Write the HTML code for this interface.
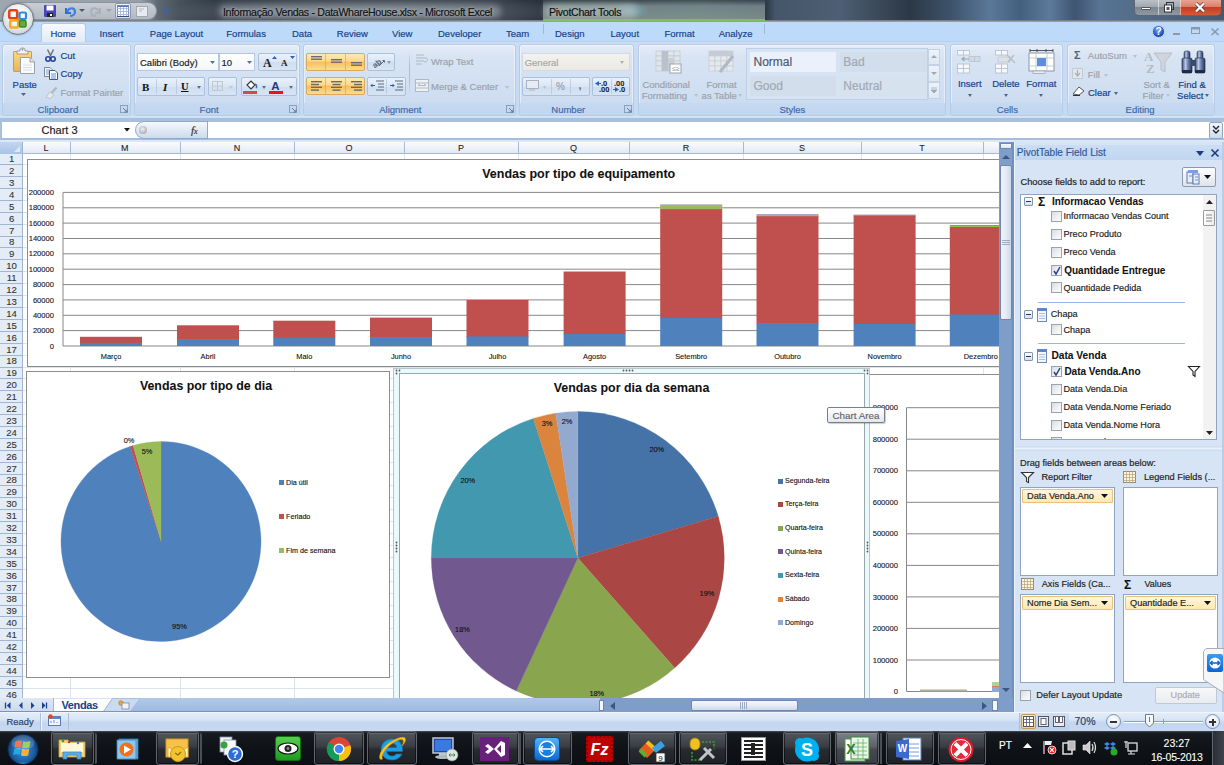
<!DOCTYPE html>
<html><head><meta charset="utf-8">
<style>
*{box-sizing:border-box}
body{margin:0;width:1224px;height:765px;overflow:hidden;position:relative;font-family:"Liberation Sans",sans-serif;background:#fff}
.a{position:absolute;margin:0}
.t{position:absolute;white-space:nowrap;line-height:1;-webkit-text-stroke:0.18px currentColor}
svg.a{overflow:visible}
</style></head><body>
<div class="a" style="left:0px;top:0px;width:1224px;height:21px;background:linear-gradient(90deg,#9ea6af 0,#97a0aa 140px,#5d6873 158px,#46515c 180px,#323c47 215px,#2f3843 330px,#343e49 480px,#2a333d 540px,#2c3a40 560px,#3b4a4e 700px,#2d3944 766px,#45556a 775px,#4d5f74 840px,#3a4858 880px,#2c3846 910px,#3d526a 950px,#5a7898 990px,#44607e 1020px,#5c7a9a 1050px,#3f5570 1075px,#587494 1100px,#46586e 1224px)"></div>
<div class="a" style="left:160px;top:-6px;width:420px;height:30px;background:radial-gradient(ellipse at 50% 60%,rgba(160,168,176,.55),rgba(120,130,140,0) 70%)"></div>
<div class="a" style="left:0px;top:20px;width:1224px;height:2px;background:linear-gradient(180deg,#6a737d,#a3aab2)"></div>
<div class="a" style="left:20px;top:2px;width:137px;height:18px;border-radius:0 9px 9px 0;background:linear-gradient(180deg,#c9ced5,#b2b9c2);border:1px solid #8b939d;border-left:none"></div>
<div class="a" style="left:2px;top:3px;width:32px;height:32px;border-radius:50%;background:radial-gradient(circle at 50% 40%,#ffffff 0,#f2f4f6 40%,#d5dae0 70%,#b9c0c8 86%,#8e969f 100%);border:1px solid #6f7882;box-shadow:0 0 2px rgba(0,0,0,.35);z-index:5"></div>
<svg class="a" style="left:8px;top:9px;z-index:6" width="20" height="20" viewBox="0 0 20 20"><rect x="1.2" y="1.2" width="8" height="8" rx="1.8" fill="none" stroke="#e2451c" stroke-width="2.6"/><rect x="11.5" y="3.5" width="6.5" height="6.5" rx="1.4" fill="none" stroke="#2b8fdc" stroke-width="2.2"/><rect x="2.2" y="11.5" width="8" height="7" rx="1.8" fill="none" stroke="#f5ad1e" stroke-width="2.6"/><rect x="11.5" y="11.5" width="6.5" height="6.5" rx="1.4" fill="#62b03a" stroke="#3f8d1e" stroke-width="1.6"/><circle cx="10.3" cy="10.3" r="1.4" fill="#e8842a"/></svg>
<svg class="a" style="left:44px;top:5px;" width="12" height="12" viewBox="0 0 12 12"><rect x="0" y="0" width="12" height="12" rx="1" fill="#4b43b8"/><rect x="2.5" y="0.5" width="7" height="5" fill="#fff"/><rect x="3" y="8" width="6" height="4" fill="#222"/><rect x="6" y="9" width="2" height="2" fill="#fff"/></svg>
<svg class="a" style="left:63px;top:5px;" width="14" height="12" viewBox="0 0 14 12"><path d="M3 3 L3 8 L8 8" fill="none" stroke="#2d6fd0" stroke-width="2"/><path d="M4 7 C6 2,12 2,12 7 C12 10,9 11,7 11" fill="none" stroke="#3d7fe0" stroke-width="2.2"/></svg>
<svg class="a" style="left:79px;top:9px;" width="6" height="4" viewBox="0 0 6 4"><path d="M0 0 L6 0 L3 3Z" fill="#4a5a70"/></svg>
<svg class="a" style="left:90px;top:5px;" width="13" height="12" viewBox="0 0 13 12"><path d="M10 3 L10 8 L5 8" fill="none" stroke="#a9b0b8" stroke-width="2"/><path d="M9 7 C7 2,1 2,1 7 C1 10,4 11,6 11" fill="none" stroke="#a9b0b8" stroke-width="2"/></svg>
<svg class="a" style="left:106px;top:9px;" width="6" height="4" viewBox="0 0 6 4"><path d="M0 0 L6 0 L3 3Z" fill="#9aa3ad"/></svg>
<div class="a" style="left:115px;top:3px;width:16px;height:16px;background:linear-gradient(180deg,#f4f6f9,#d9dee5);border:1px solid #8d96a1;border-radius:2px"></div>
<svg class="a" style="left:117px;top:5px;" width="12" height="12" viewBox="0 0 12 12"><rect x="0.5" y="0.5" width="11" height="11" fill="#fff" stroke="#7a90b8"/><path d="M0 3.5H12M0 6.5H12M0 9.5H12M3.5 0V12M6.5 0V12M9.5 0V12" stroke="#9ab0d8" stroke-width="0.8"/><rect x="0.5" y="0.5" width="11" height="1.5" fill="#5a78b0"/><rect x="0" y="11" width="12" height="1" fill="#34507a"/></svg>
<svg class="a" style="left:136px;top:6px;" width="12" height="11" viewBox="0 0 12 11"><rect x="0.5" y="0.5" width="11" height="10" fill="#e8ecf0" stroke="#a0a8b0"/><path d="M3 3H8M3 5H6" stroke="#b0b8c0"/></svg>
<svg class="a" style="left:163px;top:8px;" width="6" height="6" viewBox="0 0 6 6"><path d="M0.5 0.5H5.5M0.5 2.5 L5.5 2.5 L3 5.5Z" stroke="#3a62b0" fill="#3a62b0" stroke-width="0.8"/></svg>
<div class="a" style="left:219px;top:5px;width:282px;height:13px;border-radius:6px;background:rgba(160,168,176,.62);filter:blur(3px)"></div>
<div class="t" style="left:223.0px;top:6.5px;font-size:10.6px;color:#101010;letter-spacing:-0.32px;text-shadow:0 0 3px #c0c5ca">Informação Vendas - DataWhareHouse.xlsx - Microsoft Excel</div>
<div class="a" style="left:543px;top:0px;width:222px;height:20px;background:linear-gradient(180deg,rgba(90,105,115,.2) 0,rgba(150,168,172,.62) 30%,rgba(150,175,165,.7) 100%)"></div>
<div class="a" style="left:610px;top:2px;width:40px;height:17px;background:radial-gradient(ellipse at 50% 50%,rgba(120,190,220,.6),rgba(120,190,220,0) 70%)"></div>
<div class="a" style="left:543px;top:19px;width:222px;height:2px;background:#7cc05a"></div>
<div class="a" style="left:545px;top:5px;width:92px;height:13px;border-radius:6px;background:rgba(175,185,182,.75);filter:blur(3px)"></div>
<div class="t" style="left:549.0px;top:6.5px;font-size:10.6px;color:#101010;letter-spacing:-0.3px">PivotChart Tools</div>
<div class="a" style="left:1134px;top:0px;width:87px;height:16px;border:1px solid #5c6570;border-top:none;border-radius:0 0 5px 5px;overflow:hidden;background:linear-gradient(180deg,#b9c0c8 0,#a0a8b2 45%,#7d8792 50%,#8e98a3 100%)"></div>
<div class="a" style="left:1180px;top:0px;width:41px;height:15px;border-radius:0 0 4px 0;background:linear-gradient(180deg,#e8a393 0,#d9806b 45%,#c43f22 50%,#d45a3a 100%)"></div>
<div class="a" style="left:1158px;top:0px;width:1px;height:15px;background:rgba(255,255,255,.5)"></div>
<div class="a" style="left:1180px;top:0px;width:1px;height:15px;background:rgba(255,255,255,.5)"></div>
<div class="a" style="left:1141px;top:7px;width:10px;height:3px;background:#fff;border:1px solid #555;border-radius:1px"></div>
<svg class="a" style="left:1163px;top:2px;" width="12" height="11" viewBox="0 0 12 11"><rect x="3.5" y="0.5" width="7" height="7" fill="none" stroke="#333" stroke-width="1"/><rect x="1.5" y="3" width="7" height="7" fill="#fff" stroke="#333" stroke-width="1"/><rect x="3.5" y="5" width="3" height="3" fill="#555"/></svg>
<svg class="a" style="left:1193px;top:2px;" width="14" height="11" viewBox="0 0 14 11"><path d="M3 1.5 L11 9.5 M11 1.5 L3 9.5" stroke="#5a2a20" stroke-width="3.6"/><path d="M3 1.5 L11 9.5 M11 1.5 L3 9.5" stroke="#fff" stroke-width="2.4"/></svg>
<div class="a" style="left:0px;top:22px;width:1224px;height:20px;background:#bedafb"></div>
<div class="a" style="left:0px;top:41px;width:1224px;height:2px;background:linear-gradient(180deg,#a9c4e7,#dce8f6)"></div>
<div class="a" style="left:41px;top:23px;width:45px;height:20px;border:1px solid #b3c8e3;border-bottom:none;border-radius:3px 3px 0 0;background:linear-gradient(180deg,#f7fafd 0,#e9f0f9 60%,#dfe9f5 100%)"></div>
<div class="t" style="left:50.5px;top:28.7px;font-size:9.5px;color:#15428b;">Home</div>
<div class="t" style="left:99.6px;top:28.7px;font-size:9.5px;color:#15428b;">Insert</div>
<div class="t" style="left:149.8px;top:28.7px;font-size:9.5px;color:#15428b;">Page Layout</div>
<div class="t" style="left:226.3px;top:28.7px;font-size:9.5px;color:#15428b;">Formulas</div>
<div class="t" style="left:292.0px;top:28.7px;font-size:9.5px;color:#15428b;">Data</div>
<div class="t" style="left:336.8px;top:28.7px;font-size:9.5px;color:#15428b;">Review</div>
<div class="t" style="left:392.0px;top:28.7px;font-size:9.5px;color:#15428b;">View</div>
<div class="t" style="left:438.0px;top:28.7px;font-size:9.5px;color:#15428b;">Developer</div>
<div class="t" style="left:506.0px;top:28.7px;font-size:9.5px;color:#15428b;">Team</div>
<div class="t" style="left:555.0px;top:28.7px;font-size:9.5px;color:#15428b;">Design</div>
<div class="t" style="left:610.5px;top:28.7px;font-size:9.5px;color:#15428b;">Layout</div>
<div class="t" style="left:664.5px;top:28.7px;font-size:9.5px;color:#15428b;">Format</div>
<div class="t" style="left:718.7px;top:28.7px;font-size:9.5px;color:#15428b;">Analyze</div>
<div class="a" style="left:543px;top:24px;width:1px;height:10px;background:#9db7d9"></div>
<div class="a" style="left:764px;top:24px;width:1px;height:10px;background:#9db7d9"></div>
<div class="a" style="left:1152px;top:25px;width:13px;height:13px;border-radius:50%;background:radial-gradient(circle at 45% 35%,#6aa2f0,#1a48b8 70%);border:1px solid #b8cde8"></div>
<div class="t" style="left:1158.5px;transform:translateX(-50%);top:26.8px;font-size:10px;color:#fff;font-weight:bold;-webkit-text-stroke:0.05px currentColor;">?</div>
<div class="a" style="left:1173px;top:33px;width:7px;height:2px;background:#8a98aa"></div>
<svg class="a" style="left:1191px;top:27px;" width="10" height="8" viewBox="0 0 10 8"><rect x="0.5" y="0.5" width="8" height="6" fill="none" stroke="#8a98aa"/><rect x="0.5" y="0.5" width="8" height="2" fill="#8a98aa"/></svg>
<svg class="a" style="left:1210px;top:27px;" width="10" height="9" viewBox="0 0 10 9"><path d="M1.5 1.5L8.5 8M8.5 1.5L1.5 8" stroke="#8a98aa" stroke-width="1.6"/></svg>
<div class="a" style="left:0px;top:42px;width:1224px;height:77px;background:linear-gradient(180deg,#c9ddf6 0,#c4d9f3 100%)"></div>
<div class="a" style="left:0px;top:117px;width:1224px;height:2px;background:#b4c9e5"></div>
<div class="a" style="left:2px;top:44px;width:129px;height:72px;border:1px solid #b7cbe4;border-radius:3px;background:linear-gradient(180deg,#e4ecf7 0,#d8e4f3 18%,#cfdef1 70%,#c9daef 100%);box-shadow:inset 0 0 0 1px rgba(255,255,255,.45)"></div>
<div class="a" style="left:3px;top:103px;width:127px;height:12px;background:linear-gradient(180deg,#c5d9f0,#c1d6f0);border-radius:0 0 2px 2px"></div>
<div class="t" style="left:37.6px;top:104.7px;font-size:9.5px;color:#3e6aaa;">Clipboard</div>
<svg class="a" style="left:120px;top:105px;" width="8" height="8" viewBox="0 0 8 8"><rect x="0.5" y="0.5" width="7" height="7" fill="none" stroke="#8aa0bc" stroke-width="1"/><path d="M3 3 L7 7 M4.5 7H7V4.5" stroke="#667a96" fill="none"/></svg>
<div class="a" style="left:13px;top:51px;width:19px;height:21px;background:linear-gradient(180deg,#f9d88a,#eab552);border:1px solid #cf9d45;border-radius:1px"></div>
<svg class="a" style="left:16px;top:47px;" width="13" height="8" viewBox="0 0 13 8"><path d="M1 7 V4 H4 V2 Q6.5 -0.5 9 2 V4 H12 V7Z" fill="#f4f4f4" stroke="#8a8a8a" stroke-width="0.8"/><circle cx="6.5" cy="2.5" r="0.9" fill="#888"/></svg>
<svg class="a" style="left:20px;top:57px;" width="15" height="17" viewBox="0 0 15 17"><path d="M0.5 0.5 H10 L14.5 5 V16.5 H0.5Z" fill="#fbfbfb" stroke="#9aa0a8"/><path d="M10 0.5 V5 H14.5" fill="#e0e4e8" stroke="#9aa0a8"/><path d="M3 8H12M3 10.5H12M3 13H12" stroke="#d2d6dc" stroke-width="0.8"/></svg>
<div class="t" style="left:12.6px;top:79.9px;font-size:9.5px;color:#15428b;">Paste</div>
<svg class="a" style="left:21px;top:93px;" width="5" height="3" viewBox="0 0 5 3"><path d="M0 0H5L2.5 3Z" fill="#4e6588"/></svg>
<svg class="a" style="left:45px;top:49px;" width="11" height="13" viewBox="0 0 11 13"><path d="M2.5 0.5 L6 7.5 M8.5 0.5 L5 7.5" stroke="#6a6e74" stroke-width="1.4"/><circle cx="3" cy="10" r="2.2" fill="none" stroke="#27459a" stroke-width="1.6"/><circle cx="8" cy="10" r="2.2" fill="none" stroke="#27459a" stroke-width="1.6"/></svg>
<div class="t" style="left:60.4px;top:50.7px;font-size:9.5px;color:#15428b;">Cut</div>
<svg class="a" style="left:44px;top:67px;" width="14" height="13" viewBox="0 0 14 13"><path d="M0.5 0.5H6L8 2.5V9.5H0.5Z" fill="#f4f6f9" stroke="#7a8494"/><path d="M2 3H6M2 5H6M2 7H6" stroke="#5a8ad0" stroke-width="0.8"/><path d="M5.5 3.5H11L13.5 6V12.5H5.5Z" fill="#fff" stroke="#3a5aa0"/><path d="M7 7H12M7 9H12M7 11H12" stroke="#3a70c8" stroke-width="0.8"/></svg>
<div class="t" style="left:60.4px;top:69.2px;font-size:9.5px;color:#15428b;">Copy</div>
<svg class="a" style="left:45px;top:86px;" width="13" height="13" viewBox="0 0 13 13"><path d="M1 11.5 L4.5 6 L9 8.5 L5.5 12.5Z" fill="#e6e9ed" stroke="#b4bac2" stroke-width="0.8"/><path d="M6.5 7 L11.5 1.5" stroke="#b4bac2" stroke-width="2.6"/></svg>
<div class="t" style="left:60.4px;top:87.6px;font-size:9.5px;color:#9aa2ab;">Format Painter</div>
<div class="a" style="left:134px;top:44px;width:166px;height:72px;border:1px solid #b7cbe4;border-radius:3px;background:linear-gradient(180deg,#e4ecf7 0,#d8e4f3 18%,#cfdef1 70%,#c9daef 100%);box-shadow:inset 0 0 0 1px rgba(255,255,255,.45)"></div>
<div class="a" style="left:135px;top:103px;width:164px;height:12px;background:linear-gradient(180deg,#c5d9f0,#c1d6f0);border-radius:0 0 2px 2px"></div>
<div class="t" style="left:199.6px;top:104.7px;font-size:9.5px;color:#3e6aaa;">Font</div>
<svg class="a" style="left:289px;top:105px;" width="8" height="8" viewBox="0 0 8 8"><rect x="0.5" y="0.5" width="7" height="7" fill="none" stroke="#8aa0bc" stroke-width="1"/><path d="M3 3 L7 7 M4.5 7H7V4.5" stroke="#667a96" fill="none"/></svg>
<div class="a" style="left:137px;top:53px;width:82px;height:18px;border:1px solid #b3c7e1;background:linear-gradient(180deg,#ffffff,#f3f7fc)"></div>
<div class="t" style="left:140.0px;top:57.7px;font-size:9.5px;color:#222;">Calibri (Body)</div>
<svg class="a" style="left:210px;top:61px;" width="5" height="3" viewBox="0 0 5 3"><path d="M0 0H5L2.5 3Z" fill="#5a7090"/></svg>
<div class="a" style="left:219px;top:53px;width:36px;height:18px;border:1px solid #b3c7e1;background:linear-gradient(180deg,#ffffff,#f3f7fc)"></div>
<div class="t" style="left:221.5px;top:57.7px;font-size:9.5px;color:#222;">10</div>
<svg class="a" style="left:247px;top:61px;" width="5" height="3" viewBox="0 0 5 3"><path d="M0 0H5L2.5 3Z" fill="#5a7090"/></svg>
<div class="a" style="left:258px;top:53px;width:39px;height:18px;border:1px solid #a9c0de;border-radius:2px;background:linear-gradient(180deg,#eaf1fa 0,#dae6f4 50%,#cfdef0 51%,#d7e4f3 100%);"></div>
<div class="t" style="left:263.0px;top:56.7px;font-size:12px;color:#222;font-weight:bold;-webkit-text-stroke:0.05px currentColor;font-family:Liberation Serif,serif;">A</div>
<svg class="a" style="left:272px;top:56px;" width="5" height="3" viewBox="0 0 5 3"><path d="M0 3L2.5 0L5 3Z" fill="#3060b0"/></svg>
<div class="t" style="left:281.0px;top:59.2px;font-size:9px;color:#222;font-weight:bold;-webkit-text-stroke:0.05px currentColor;font-family:Liberation Serif,serif;">A</div>
<svg class="a" style="left:290px;top:56px;" width="5" height="3" viewBox="0 0 5 3"><path d="M0 0H5L2.5 3Z" fill="#3060b0"/></svg>
<div class="a" style="left:137px;top:77px;width:68px;height:19px;border:1px solid #a9c0de;border-radius:2px;background:linear-gradient(180deg,#eaf1fa 0,#dae6f4 50%,#cfdef0 51%,#d7e4f3 100%);"></div>
<div class="a" style="left:156px;top:79px;width:1px;height:15px;background:rgba(170,190,215,.6)"></div>
<div class="a" style="left:176px;top:79px;width:1px;height:15px;background:rgba(170,190,215,.6)"></div>
<div class="t" style="left:142.0px;top:81.5px;font-size:11px;color:#111;font-weight:bold;-webkit-text-stroke:0.05px currentColor;font-family:Liberation Serif,serif;">B</div>
<div class="t" style="left:163.0px;top:81.5px;font-size:11px;color:#111;font-weight:bold;-webkit-text-stroke:0.05px currentColor;font-style:italic;font-family:Liberation Serif,serif">I</div>
<div class="t" style="left:181.0px;top:81.5px;font-size:10.5px;color:#111;font-weight:bold;-webkit-text-stroke:0.05px currentColor;text-decoration:underline;font-family:Liberation Serif,serif">U</div>
<svg class="a" style="left:197px;top:86px;" width="4" height="3" viewBox="0 0 4 3"><path d="M0 0H4L2.0 3Z" fill="#5a7090"/></svg>
<div class="a" style="left:208px;top:77px;width:29px;height:19px;border:1px solid #a9c0de;border-radius:2px;background:linear-gradient(180deg,#eaf1fa 0,#dae6f4 50%,#cfdef0 51%,#d7e4f3 100%);"></div>
<svg class="a" style="left:212px;top:81px;" width="12" height="11" viewBox="0 0 12 11"><rect x="0.5" y="0.5" width="10" height="9" fill="none" stroke="#c0c8d2"/><path d="M5.5 0V10M0 5H11" stroke="#c0c8d2"/></svg>
<svg class="a" style="left:229px;top:86px;" width="4" height="3" viewBox="0 0 4 3"><path d="M0 0H4L2.0 3Z" fill="#c0c8d2"/></svg>
<div class="a" style="left:241px;top:77px;width:56px;height:19px;border:1px solid #a9c0de;border-radius:2px;background:linear-gradient(180deg,#eaf1fa 0,#dae6f4 50%,#cfdef0 51%,#d7e4f3 100%);"></div>
<svg class="a" style="left:244px;top:79px;" width="15" height="11" viewBox="0 0 15 11"><path d="M3 6 L7 2 L11 6 L7 10Z" fill="#fff" stroke="#333" stroke-width="1.1"/><path d="M11 5 C13 6,13 8,12 9" stroke="#3a70c0" stroke-width="1.6" fill="none"/></svg>
<div class="a" style="left:243px;top:91px;width:14px;height:3px;background:#d24a4a"></div>
<svg class="a" style="left:262px;top:86px;" width="4" height="3" viewBox="0 0 4 3"><path d="M0 0H4L2.0 3Z" fill="#5a7090"/></svg>
<div class="t" style="left:275.5px;transform:translateX(-50%);top:80.5px;font-size:11.5px;color:#1f3a80;font-weight:bold;-webkit-text-stroke:0.05px currentColor;">A</div>
<div class="a" style="left:269px;top:91px;width:14px;height:3px;background:#e8141a"></div>
<svg class="a" style="left:289px;top:86px;" width="4" height="3" viewBox="0 0 4 3"><path d="M0 0H4L2.0 3Z" fill="#5a7090"/></svg>
<div class="a" style="left:303px;top:44px;width:213px;height:72px;border:1px solid #b7cbe4;border-radius:3px;background:linear-gradient(180deg,#e4ecf7 0,#d8e4f3 18%,#cfdef1 70%,#c9daef 100%);box-shadow:inset 0 0 0 1px rgba(255,255,255,.45)"></div>
<div class="a" style="left:304px;top:103px;width:211px;height:12px;background:linear-gradient(180deg,#c5d9f0,#c1d6f0);border-radius:0 0 2px 2px"></div>
<div class="t" style="left:379.2px;top:104.7px;font-size:9.5px;color:#3e6aaa;">Alignment</div>
<svg class="a" style="left:506px;top:105px;" width="8" height="8" viewBox="0 0 8 8"><rect x="0.5" y="0.5" width="7" height="7" fill="none" stroke="#8aa0bc" stroke-width="1"/><path d="M3 3 L7 7 M4.5 7H7V4.5" stroke="#667a96" fill="none"/></svg>
<div class="a" style="left:306px;top:53px;width:59px;height:18px;border:1px solid #d9aa5c;border-radius:2px;background:linear-gradient(180deg,#fde9b6 0,#fcd88b 45%,#f9bf5a 50%,#fbdc8f 100%)"></div>
<div class="a" style="left:325px;top:54px;width:1px;height:16px;background:rgba(210,160,80,.6)"></div>
<div class="a" style="left:345px;top:54px;width:1px;height:16px;background:rgba(210,160,80,.6)"></div>
<div class="a" style="left:306px;top:77px;width:59px;height:18px;border:1px solid #d9aa5c;border-radius:2px;background:linear-gradient(180deg,#fde9b6 0,#fcd88b 45%,#f9bf5a 50%,#fbdc8f 100%)"></div>
<div class="a" style="left:325px;top:78px;width:1px;height:16px;background:rgba(210,160,80,.6)"></div>
<div class="a" style="left:345px;top:78px;width:1px;height:16px;background:rgba(210,160,80,.6)"></div>
<svg class="a" style="left:310px;top:55px;" width="13" height="13" viewBox="0 0 13 13"><rect x="1" y="1.0" width="11" height="1.4" fill="#6a6a6a"/><rect x="1" y="3.5" width="11" height="1.4" fill="#6a6a6a"/></svg>
<svg class="a" style="left:330px;top:55px;" width="13" height="13" viewBox="0 0 13 13"><rect x="1" y="4.0" width="11" height="1.4" fill="#6a6a6a"/><rect x="1" y="6.5" width="11" height="1.4" fill="#6a6a6a"/></svg>
<svg class="a" style="left:350px;top:55px;" width="13" height="13" viewBox="0 0 13 13"><rect x="1" y="7.0" width="11" height="1.4" fill="#6a6a6a"/><rect x="1" y="9.5" width="11" height="1.4" fill="#6a6a6a"/></svg>
<svg class="a" style="left:310px;top:80px;" width="13" height="12" viewBox="0 0 13 12"><rect x="1" y="1.0" width="11" height="1.4" fill="#6a6a6a"/><rect x="1" y="3.8" width="8" height="1.4" fill="#6a6a6a"/><rect x="1" y="6.6" width="11" height="1.4" fill="#6a6a6a"/><rect x="1" y="9.399999999999999" width="8" height="1.4" fill="#6a6a6a"/></svg>
<svg class="a" style="left:330px;top:80px;" width="13" height="12" viewBox="0 0 13 12"><rect x="1" y="1.0" width="11" height="1.4" fill="#6a6a6a"/><rect x="2.5" y="3.8" width="8" height="1.4" fill="#6a6a6a"/><rect x="1" y="6.6" width="11" height="1.4" fill="#6a6a6a"/><rect x="2.5" y="9.399999999999999" width="8" height="1.4" fill="#6a6a6a"/></svg>
<svg class="a" style="left:350px;top:80px;" width="13" height="12" viewBox="0 0 13 12"><rect x="1" y="1.0" width="11" height="1.4" fill="#6a6a6a"/><rect x="4" y="3.8" width="8" height="1.4" fill="#6a6a6a"/><rect x="1" y="6.6" width="11" height="1.4" fill="#6a6a6a"/><rect x="4" y="9.399999999999999" width="8" height="1.4" fill="#6a6a6a"/></svg>
<div class="a" style="left:367px;top:53px;width:28px;height:18px;border:1px solid #a9c0de;border-radius:2px;background:linear-gradient(180deg,#eaf1fa 0,#dae6f4 50%,#cfdef0 51%,#d7e4f3 100%);"></div>
<svg class="a" style="left:370px;top:55px;" width="16" height="13" viewBox="0 0 16 13"><text x="2" y="11" font-size="8" font-weight="bold" font-family="Liberation Sans" fill="#5a6678" transform="rotate(-40 7 8)">ab</text><path d="M9 11 L14 6 M12.5 5.5 L14.5 5.5 L14.5 7.5" stroke="#5a6678" stroke-width="1" fill="none"/></svg>
<svg class="a" style="left:387px;top:61px;" width="4" height="3" viewBox="0 0 4 3"><path d="M0 0H4L2.0 3Z" fill="#8a9ab0"/></svg>
<div class="a" style="left:367px;top:77px;width:39px;height:19px;border:1px solid #a9c0de;border-radius:2px;background:linear-gradient(180deg,#eaf1fa 0,#dae6f4 50%,#cfdef0 51%,#d7e4f3 100%);"></div>
<div class="a" style="left:386px;top:79px;width:1px;height:15px;background:rgba(170,190,215,.6)"></div>
<svg class="a" style="left:371px;top:80px;" width="14" height="12" viewBox="0 0 14 12"><path d="M5 1H13M7 4H13M7 7H13M5 10H13" stroke="#5a6a80" stroke-width="1.2"/><path d="M0 5.5H4M1.5 4L0 5.5L1.5 7" stroke="#2a5ab0" fill="none"/></svg>
<svg class="a" style="left:390px;top:80px;" width="14" height="12" viewBox="0 0 14 12"><path d="M5 1H13M7 4H13M7 7H13M5 10H13" stroke="#5a6a80" stroke-width="1.2"/><path d="M0 5.5H4M2.5 4L4 5.5L2.5 7" stroke="#2a5ab0" fill="none"/></svg>
<div class="a" style="left:409px;top:52px;width:1px;height:42px;background:linear-gradient(180deg,rgba(160,185,215,0),#a9c0dc 30%,#a9c0dc 70%,rgba(160,185,215,0))"></div>
<svg class="a" style="left:415px;top:53px;" width="14" height="14" viewBox="0 0 14 14"><path d="M1 2H9M1 5H11M1 8H9M1 11H7" stroke="#b0b8c2" stroke-width="1.2"/><path d="M11 5 C13 5,13 9,10 9 L9 9" stroke="#b0b8c2" fill="none"/></svg>
<div class="t" style="left:431.0px;top:57.4px;font-size:9.5px;color:#9aa2ab;">Wrap Text</div>
<svg class="a" style="left:415px;top:79px;" width="14" height="13" viewBox="0 0 14 13"><rect x="0.5" y="0.5" width="13" height="12" fill="#eef2f6" stroke="#b0b8c2"/><path d="M0 4H14M0 9H14M3 6.5H11M3 6.5L5 5M11 6.5L9 5" stroke="#b0b8c2"/></svg>
<div class="t" style="left:431.0px;top:81.9px;font-size:9.5px;color:#9aa2ab;">Merge &amp; Center</div>
<svg class="a" style="left:505px;top:86px;" width="4" height="3" viewBox="0 0 4 3"><path d="M0 0H4L2.0 3Z" fill="#b8c0ca"/></svg>
<div class="a" style="left:519px;top:44px;width:115px;height:72px;border:1px solid #b7cbe4;border-radius:3px;background:linear-gradient(180deg,#e4ecf7 0,#d8e4f3 18%,#cfdef1 70%,#c9daef 100%);box-shadow:inset 0 0 0 1px rgba(255,255,255,.45)"></div>
<div class="a" style="left:520px;top:103px;width:113px;height:12px;background:linear-gradient(180deg,#c5d9f0,#c1d6f0);border-radius:0 0 2px 2px"></div>
<div class="t" style="left:551.3px;top:104.7px;font-size:9.5px;color:#3e6aaa;">Number</div>
<svg class="a" style="left:624px;top:105px;" width="8" height="8" viewBox="0 0 8 8"><rect x="0.5" y="0.5" width="7" height="7" fill="none" stroke="#8aa0bc" stroke-width="1"/><path d="M3 3 L7 7 M4.5 7H7V4.5" stroke="#667a96" fill="none"/></svg>
<div class="a" style="left:522px;top:53px;width:108px;height:18px;border:1px solid #d3dbe6;background:linear-gradient(180deg,#f4f2ee,#ece9e4)"></div>
<div class="t" style="left:524.7px;top:57.7px;font-size:9.5px;color:#a8a8a8;">General</div>
<svg class="a" style="left:620px;top:61px;" width="4" height="3" viewBox="0 0 4 3"><path d="M0 0H4L2.0 3Z" fill="#b0b0b0"/></svg>
<div class="a" style="left:522px;top:77px;width:68px;height:19px;border:1px solid #a9c0de;border-radius:2px;background:linear-gradient(180deg,#eaf1fa 0,#dae6f4 50%,#cfdef0 51%,#d7e4f3 100%);"></div>
<div class="a" style="left:551px;top:79px;width:1px;height:15px;background:rgba(170,190,215,.6)"></div>
<div class="a" style="left:570px;top:79px;width:1px;height:15px;background:rgba(170,190,215,.6)"></div>
<svg class="a" style="left:526px;top:80px;" width="14" height="12" viewBox="0 0 14 12"><rect x="0.5" y="0.5" width="12" height="8" fill="#e8ecf2" stroke="#a8b2c0"/><path d="M3 10 L9 10" stroke="#a8b2c0"/></svg>
<svg class="a" style="left:543px;top:86px;" width="3" height="3" viewBox="0 0 3 3"><path d="M0 0H3L1.5 3Z" fill="#b8c0ca"/></svg>
<div class="t" style="left:560.5px;transform:translateX(-50%);top:81.7px;font-size:10px;color:#9aa2ac;">%</div>
<div class="t" style="left:580.0px;transform:translateX(-50%);top:79.7px;font-size:11px;color:#6a7280;font-weight:bold;-webkit-text-stroke:0.05px currentColor;">,</div>
<div class="a" style="left:592px;top:77px;width:38px;height:19px;border:1px solid #a9c0de;border-radius:2px;background:linear-gradient(180deg,#eaf1fa 0,#dae6f4 50%,#cfdef0 51%,#d7e4f3 100%);"></div>
<div class="a" style="left:611px;top:79px;width:1px;height:15px;background:rgba(170,190,215,.6)"></div>
<svg class="a" style="left:595px;top:81px;" width="4" height="5" viewBox="0 0 4 5"><path d="M0 2.5L4 0V5Z" fill="#2a62c8"/></svg>
<div class="a" style="left:598px;top:83px;width:3px;height:1px;background:#2a62c8"></div>
<div class="t" style="left:601.0px;top:79.7px;font-size:7.5px;color:#1a1a1a;font-weight:bold;-webkit-text-stroke:0.05px currentColor;">.0</div>
<div class="t" style="left:599.0px;top:86.0px;font-size:7.5px;color:#1a1a1a;font-weight:bold;-webkit-text-stroke:0.05px currentColor;">.00</div>
<div class="t" style="left:614.0px;top:79.7px;font-size:7.5px;color:#1a1a1a;font-weight:bold;-webkit-text-stroke:0.05px currentColor;">.00</div>
<svg class="a" style="left:615px;top:87px;" width="4" height="5" viewBox="0 0 4 5"><path d="M4 2.5L0 0V5Z" fill="#2a62c8"/></svg>
<div class="a" style="left:613px;top:89px;width:3px;height:1px;background:#2a62c8"></div>
<div class="t" style="left:619.0px;top:86.0px;font-size:7.5px;color:#1a1a1a;font-weight:bold;-webkit-text-stroke:0.05px currentColor;">.0</div>
<div class="a" style="left:638px;top:44px;width:308px;height:72px;border:1px solid #b7cbe4;border-radius:3px;background:linear-gradient(180deg,#e4ecf7 0,#d8e4f3 18%,#cfdef1 70%,#c9daef 100%);box-shadow:inset 0 0 0 1px rgba(255,255,255,.45)"></div>
<div class="a" style="left:639px;top:103px;width:306px;height:12px;background:linear-gradient(180deg,#c5d9f0,#c1d6f0);border-radius:0 0 2px 2px"></div>
<div class="t" style="left:779.5px;top:104.7px;font-size:9.5px;color:#3e6aaa;">Styles</div>
<svg class="a" style="left:655px;top:50px;" width="27" height="24" viewBox="0 0 27 24"><g fill="#e2e6ea" stroke="#c4cad2" stroke-width="0.8"><rect x="1" y="1" width="6" height="5"/><rect x="7" y="1" width="6" height="5"/><rect x="13" y="1" width="6" height="5"/><rect x="19" y="1" width="6" height="5"/><rect x="1" y="6" width="6" height="5"/><rect x="7" y="6" width="6" height="5"/><rect x="13" y="6" width="6" height="5"/><rect x="19" y="6" width="6" height="5"/><rect x="1" y="11" width="6" height="5"/><rect x="7" y="11" width="6" height="5"/><rect x="13" y="11" width="6" height="5"/><rect x="19" y="11" width="6" height="5"/><rect x="1" y="16" width="6" height="5"/><rect x="7" y="16" width="6" height="5"/><rect x="13" y="16" width="6" height="5"/><rect x="19" y="16" width="6" height="5"/></g><rect x="7" y="1" width="6" height="20" fill="#b9c2cc"/><rect x="13" y="8" width="6" height="13" fill="#c7cfd8"/><rect x="15" y="14" width="11" height="9" fill="#fff" stroke="#9aa4b0"/><text x="17" y="21" font-size="7" fill="#8a94a0" font-family="Liberation Sans">≤≥</text></svg>
<div class="t" style="left:642.4px;top:79.6px;font-size:9.5px;color:#9aa2ab;">Conditional</div>
<div class="t" style="left:641.7px;top:90.7px;font-size:9.5px;color:#9aa2ab;">Formatting</div>
<svg class="a" style="left:694px;top:94px;" width="4" height="3" viewBox="0 0 4 3"><path d="M0 0H4L2.0 3Z" fill="#b8c0ca"/></svg>
<svg class="a" style="left:708px;top:50px;" width="28" height="24" viewBox="0 0 28 24"><g fill="#e6eaee" stroke="#c8ced6" stroke-width="0.8"><rect x="1" y="1" width="6" height="5"/><rect x="7" y="1" width="6" height="5"/><rect x="13" y="1" width="6" height="5"/><rect x="19" y="1" width="6" height="5"/><rect x="1" y="6" width="6" height="5"/><rect x="7" y="6" width="6" height="5"/><rect x="13" y="6" width="6" height="5"/><rect x="19" y="6" width="6" height="5"/><rect x="1" y="11" width="6" height="5"/><rect x="7" y="11" width="6" height="5"/><rect x="13" y="11" width="6" height="5"/><rect x="19" y="11" width="6" height="5"/><rect x="1" y="16" width="6" height="5"/><rect x="7" y="16" width="6" height="5"/><rect x="13" y="16" width="6" height="5"/><rect x="19" y="16" width="6" height="5"/></g><rect x="1" y="1" width="24" height="5" fill="#c5ccd5"/><path d="M12 22 L25 6" stroke="#b0b8c2" stroke-width="3"/></svg>
<div class="t" style="left:706.5px;top:79.6px;font-size:9.5px;color:#9aa2ab;">Format</div>
<div class="t" style="left:701.6px;top:90.7px;font-size:9.5px;color:#9aa2ab;">as Table</div>
<svg class="a" style="left:738px;top:94px;" width="4" height="3" viewBox="0 0 4 3"><path d="M0 0H4L2.0 3Z" fill="#b8c0ca"/></svg>
<div class="a" style="left:746px;top:48px;width:182px;height:52px;border:1px solid #bcd0e8;background:#d7e3f3"></div>
<div class="a" style="left:750px;top:52px;width:86px;height:20px;background:#eaf1fa"></div>
<div class="a" style="left:840px;top:52px;width:87px;height:20px;background:#d3deec"></div>
<div class="a" style="left:750px;top:76px;width:86px;height:20px;background:#d3deec"></div>
<div class="a" style="left:840px;top:76px;width:87px;height:20px;background:#d7e2ef"></div>
<div class="t" style="left:753.5px;top:56.2px;font-size:12px;color:#4a5a6e;">Normal</div>
<div class="t" style="left:843.3px;top:56.2px;font-size:12px;color:#a0a8b2;">Bad</div>
<div class="t" style="left:753.5px;top:80.2px;font-size:12px;color:#a0a8b2;">Good</div>
<div class="t" style="left:843.3px;top:80.2px;font-size:12px;color:#a0a8b2;">Neutral</div>
<div class="a" style="left:928px;top:49px;width:12px;height:16px;border:1px solid #c3d3e6;background:linear-gradient(180deg,#eef3f9,#dfe7f1)"></div>
<div class="a" style="left:928px;top:65px;width:12px;height:17px;border:1px solid #c3d3e6;background:linear-gradient(180deg,#eef3f9,#dfe7f1)"></div>
<div class="a" style="left:928px;top:82px;width:12px;height:17px;border:1px solid #c3d3e6;background:linear-gradient(180deg,#eef3f9,#dfe7f1)"></div>
<svg class="a" style="left:931px;top:55px;" width="6" height="3" viewBox="0 0 6 3"><path d="M0 3L3 0L6 3Z" fill="#9aa8b8"/></svg>
<svg class="a" style="left:931px;top:72px;" width="6" height="3" viewBox="0 0 6 3"><path d="M0 0H6L3 3Z" fill="#9aa8b8"/></svg>
<svg class="a" style="left:931px;top:88px;" width="6" height="5" viewBox="0 0 6 5"><path d="M0 0H6M0 2H6L3 5Z" stroke="#9aa8b8" fill="#9aa8b8" stroke-width="0.8"/></svg>
<div class="a" style="left:950px;top:44px;width:113px;height:72px;border:1px solid #b7cbe4;border-radius:3px;background:linear-gradient(180deg,#e4ecf7 0,#d8e4f3 18%,#cfdef1 70%,#c9daef 100%);box-shadow:inset 0 0 0 1px rgba(255,255,255,.45)"></div>
<div class="a" style="left:951px;top:103px;width:111px;height:12px;background:linear-gradient(180deg,#c5d9f0,#c1d6f0);border-radius:0 0 2px 2px"></div>
<div class="t" style="left:996.8px;top:104.7px;font-size:9.5px;color:#3e6aaa;">Cells</div>
<svg class="a" style="left:956px;top:49px;" width="30" height="25" viewBox="0 0 30 25"><rect x="1.5" y="1.5" width="6" height="4.5" fill="#f6f8fb" stroke="#b9c3cf" stroke-width="0.9"/><rect x="7.5" y="1.5" width="6" height="4.5" fill="#f6f8fb" stroke="#b9c3cf" stroke-width="0.9"/><rect x="1.5" y="15" width="6" height="4.5" fill="#f6f8fb" stroke="#b9c3cf" stroke-width="0.9"/><rect x="7.5" y="15" width="6" height="4.5" fill="#f6f8fb" stroke="#b9c3cf" stroke-width="0.9"/><rect x="1.5" y="19.5" width="6" height="4.5" fill="#f6f8fb" stroke="#b9c3cf" stroke-width="0.9"/><rect x="7.5" y="19.5" width="6" height="4.5" fill="#f6f8fb" stroke="#b9c3cf" stroke-width="0.9"/><rect x="13" y="7.5" width="5.5" height="5" fill="#d3d9e0" stroke="#b9c3cf" stroke-width="0.8"/><rect x="18.5" y="7.5" width="5.5" height="5" fill="#d3d9e0" stroke="#b9c3cf" stroke-width="0.8"/><path d="M6 10H13M8.5 8L6 10L8.5 12" stroke="#9aa6b4" stroke-width="1.2" fill="none"/></svg>
<div class="t" style="left:957.9px;top:79.4px;font-size:9.5px;color:#15428b;">Insert</div>
<svg class="a" style="left:967.5px;top:93.5px;" width="4" height="3" viewBox="0 0 4 3"><path d="M0 0H4L2.0 3Z" fill="#4e6588"/></svg>
<svg class="a" style="left:994px;top:49px;" width="29" height="25" viewBox="0 0 29 25"><rect x="1.5" y="1.5" width="6" height="4.5" fill="#f6f8fb" stroke="#b9c3cf" stroke-width="0.9"/><rect x="7.5" y="1.5" width="6" height="4.5" fill="#f6f8fb" stroke="#b9c3cf" stroke-width="0.9"/><rect x="1.5" y="15" width="6" height="4.5" fill="#f6f8fb" stroke="#b9c3cf" stroke-width="0.9"/><rect x="7.5" y="15" width="6" height="4.5" fill="#f6f8fb" stroke="#b9c3cf" stroke-width="0.9"/><rect x="1.5" y="19.5" width="6" height="4.5" fill="#f6f8fb" stroke="#b9c3cf" stroke-width="0.9"/><rect x="7.5" y="19.5" width="6" height="4.5" fill="#f6f8fb" stroke="#b9c3cf" stroke-width="0.9"/><rect x="4" y="8" width="12" height="5" fill="#dde2e8" stroke="#c3cbd4" stroke-width="0.8"/><path d="M13 6L21 14M20 6L14 13" stroke="#b3bcc7" stroke-width="1.4"/></svg>
<div class="t" style="left:992.2px;top:79.4px;font-size:9.5px;color:#15428b;">Delete</div>
<svg class="a" style="left:1003.5px;top:93.5px;" width="4" height="3" viewBox="0 0 4 3"><path d="M0 0H4L2.0 3Z" fill="#4e6588"/></svg>
<svg class="a" style="left:1027px;top:49px;" width="29" height="25" viewBox="0 0 29 25"><path d="M3 1.5H26M3 0V3M26 0V3M10 0V3M19 0V3" stroke="#333" stroke-width="0.8"/><rect x="2" y="4" width="25" height="18" fill="#fff" stroke="#8a96a4"/><path d="M2 9H27M2 17H27M9 4V22M20 4V22" stroke="#b8c0ca" stroke-width="0.8"/><rect x="10" y="9" width="9" height="8" fill="#5b8ee0"/><rect x="6" y="22" width="12" height="2.5" fill="#e8ecf0" stroke="#8a96a4" stroke-width="0.6"/></svg>
<div class="t" style="left:1026.3px;top:79.4px;font-size:9.5px;color:#15428b;">Format</div>
<svg class="a" style="left:1039px;top:93.5px;" width="4" height="3" viewBox="0 0 4 3"><path d="M0 0H4L2.0 3Z" fill="#4e6588"/></svg>
<div class="a" style="left:1067px;top:44px;width:148px;height:72px;border:1px solid #b7cbe4;border-radius:3px;background:linear-gradient(180deg,#e4ecf7 0,#d8e4f3 18%,#cfdef1 70%,#c9daef 100%);box-shadow:inset 0 0 0 1px rgba(255,255,255,.45)"></div>
<div class="a" style="left:1068px;top:103px;width:146px;height:12px;background:linear-gradient(180deg,#c5d9f0,#c1d6f0);border-radius:0 0 2px 2px"></div>
<div class="t" style="left:1125.6px;top:104.7px;font-size:9.5px;color:#3e6aaa;">Editing</div>
<div class="t" style="left:1074.0px;top:50.2px;font-size:11px;color:#5a6270;font-weight:bold;-webkit-text-stroke:0.05px currentColor;">Σ</div>
<div class="t" style="left:1087.8px;top:50.9px;font-size:9.5px;color:#9aa2ab;">AutoSum</div>
<svg class="a" style="left:1133px;top:55px;" width="4" height="3" viewBox="0 0 4 3"><path d="M0 0H4L2.0 3Z" fill="#b8c0ca"/></svg>
<div class="a" style="left:1072px;top:68px;width:11px;height:11px;border:1px solid #c0c8d0;background:#e2e8ee;border-radius:1px"></div>
<svg class="a" style="left:1074px;top:70px;" width="7" height="7" viewBox="0 0 7 7"><path d="M3.5 0V5M1 3L3.5 6L6 3" stroke="#a8b0ba" fill="none" stroke-width="1.2"/></svg>
<div class="t" style="left:1087.8px;top:69.7px;font-size:9.5px;color:#9aa2ab;">Fill</div>
<svg class="a" style="left:1104px;top:73.5px;" width="4" height="3" viewBox="0 0 4 3"><path d="M0 0H4L2.0 3Z" fill="#b8c0ca"/></svg>
<svg class="a" style="left:1072px;top:86px;" width="13" height="10" viewBox="0 0 13 10"><path d="M1 8 L7 1 L12 5 L7 9Z" fill="#fff" stroke="#555" stroke-width="1"/><path d="M1 9.5H8" stroke="#333"/></svg>
<div class="t" style="left:1088.0px;top:87.6px;font-size:9.5px;color:#15428b;">Clear</div>
<svg class="a" style="left:1114px;top:91.5px;" width="4" height="3" viewBox="0 0 4 3"><path d="M0 0H4L2.0 3Z" fill="#4e6588"/></svg>
<svg class="a" style="left:1143px;top:49px;" width="30" height="25" viewBox="0 0 30 25"><text x="1" y="12" font-size="13" font-weight="bold" font-family="Liberation Serif" fill="#b4bcc6">A</text><text x="3" y="24" font-size="13" font-weight="bold" font-family="Liberation Serif" fill="#b4bcc6">Z</text><path d="M11 4 H29 L22 13 V23 L18 21 V13Z" fill="#cfd5dc" stroke="#b0b8c2" stroke-width="0.8"/></svg>
<div class="t" style="left:1143.5px;top:79.6px;font-size:9.5px;color:#9aa2ab;">Sort &amp;</div>
<div class="t" style="left:1142.6px;top:90.7px;font-size:9.5px;color:#9aa2ab;">Filter</div>
<svg class="a" style="left:1166px;top:94px;" width="4" height="3" viewBox="0 0 4 3"><path d="M0 0H4L2.0 3Z" fill="#b8c0ca"/></svg>
<svg class="a" style="left:1180px;top:49px;" width="27" height="26" viewBox="0 0 27 26"><defs><linearGradient id="bino" x1="0" x2="1"><stop offset="0" stop-color="#3c4e74"/><stop offset="0.35" stop-color="#b8c8e4"/><stop offset="0.6" stop-color="#6a82b0"/><stop offset="1" stop-color="#25355a"/></linearGradient></defs><rect x="4" y="2" width="6" height="8" rx="2" fill="url(#bino)" stroke="#2a3a5c" stroke-width="0.6"/><rect x="17" y="2" width="6" height="8" rx="2" fill="url(#bino)" stroke="#2a3a5c" stroke-width="0.6"/><rect x="2" y="9" width="10" height="15" rx="1.5" fill="url(#bino)" stroke="#22304e" stroke-width="0.7"/><rect x="15" y="9" width="10" height="15" rx="1.5" fill="url(#bino)" stroke="#22304e" stroke-width="0.7"/><rect x="11" y="11" width="5" height="6" fill="#3a4a6e"/><rect x="2" y="21" width="10" height="3" fill="#1e2a48"/><rect x="15" y="21" width="10" height="3" fill="#1e2a48"/></svg>
<div class="t" style="left:1178.3px;top:79.6px;font-size:9.5px;color:#15428b;">Find &amp;</div>
<div class="t" style="left:1177.1px;top:90.7px;font-size:9.5px;color:#15428b;">Select</div>
<svg class="a" style="left:1205px;top:94px;" width="4" height="3" viewBox="0 0 4 3"><path d="M0 0H4L2.0 3Z" fill="#4e6588"/></svg>
<div class="a" style="left:0px;top:116px;width:1224px;height:3px;background:linear-gradient(180deg,#d9e7f6,#c4d7ef)"></div>
<div class="a" style="left:0px;top:118px;width:1224px;height:4px;background:#a9c0dd"></div>
<div class="a" style="left:0px;top:122px;width:1224px;height:16px;background:#fff"></div>
<div class="a" style="left:0px;top:138px;width:1224px;height:2px;background:#a7bedb"></div>
<div class="a" style="left:0px;top:140px;width:1224px;height:2px;background:#dbe7f5"></div>
<div class="a" style="left:0px;top:142px;width:1224px;height:1px;background:#86a2c8"></div>
<div class="a" style="left:0px;top:122px;width:2px;height:16px;background:#a9c0dd"></div>
<div class="t" style="left:41.5px;top:124.9px;font-size:11px;color:#1a1a1a;">Chart 3</div>
<svg class="a" style="left:124px;top:128px;" width="6" height="4" viewBox="0 0 6 4"><path d="M0 0H6L3 3.5Z" fill="#111"/></svg>
<div class="a" style="left:135px;top:121px;width:73px;height:18px;border:1px solid #8fa9cd;border-radius:9px 0 0 9px;background:linear-gradient(180deg,#f5f8fc 0,#e3ebf6 45%,#cbdbef 100%)"></div>
<div class="a" style="left:139px;top:126px;width:8px;height:8px;border-radius:50%;background:radial-gradient(circle at 45% 40%,#f0f0f0,#a8a8a8 80%)"></div>
<div class="t" style="left:191.0px;top:125.2px;font-size:11px;color:#333;font-style:italic;font-family:Liberation Serif,serif">f<span style="font-size:8px">x</span></div>
<div class="a" style="left:207px;top:121px;width:1px;height:18px;background:#8fa9cd"></div>
<div class="a" style="left:1209px;top:122px;width:14px;height:17px;border:1px solid #8aa6cc;border-radius:2px;background:linear-gradient(180deg,#f3f7fc,#cddcf0)"></div>
<svg class="a" style="left:1212px;top:125px;" width="8" height="10" viewBox="0 0 8 10"><path d="M1 1L4 4L7 1M1 5L4 8L7 5" stroke="#222" stroke-width="1.4" fill="none"/></svg>
<div class="a" style="left:0px;top:142px;width:1000px;height:12px;background:linear-gradient(180deg,#f9fbfd 0,#eef2f8 50%,#e0e7f1 100%)"></div>
<div class="a" style="left:0px;top:153px;width:1000px;height:1px;background:#a5b9d1"></div>
<div class="a" style="left:0px;top:142px;width:23px;height:12px;background:linear-gradient(180deg,#c3d6ef,#a8c3e6)"></div>
<svg class="a" style="left:14px;top:146px;" width="6" height="6" viewBox="0 0 6 6"><path d="M6 0V6H0Z" fill="#dfe9f6"/></svg>
<div class="a" style="left:70px;top:142px;width:1px;height:12px;background:#a9bbd2"></div>
<div class="t" style="left:46.0px;transform:translateX(-50%);top:144.0px;font-size:9px;color:#222;-webkit-text-stroke:0.1px currentColor">L</div>
<div class="a" style="left:180px;top:142px;width:1px;height:12px;background:#a9bbd2"></div>
<div class="t" style="left:124.8px;transform:translateX(-50%);top:144.0px;font-size:9px;color:#222;-webkit-text-stroke:0.1px currentColor">M</div>
<div class="a" style="left:294px;top:142px;width:1px;height:12px;background:#a9bbd2"></div>
<div class="t" style="left:237.0px;transform:translateX(-50%);top:144.0px;font-size:9px;color:#222;-webkit-text-stroke:0.1px currentColor">N</div>
<div class="a" style="left:404px;top:142px;width:1px;height:12px;background:#a9bbd2"></div>
<div class="t" style="left:349.0px;transform:translateX(-50%);top:144.0px;font-size:9px;color:#222;-webkit-text-stroke:0.1px currentColor">O</div>
<div class="a" style="left:518px;top:142px;width:1px;height:12px;background:#a9bbd2"></div>
<div class="t" style="left:461.0px;transform:translateX(-50%);top:144.0px;font-size:9px;color:#222;-webkit-text-stroke:0.1px currentColor">P</div>
<div class="a" style="left:629px;top:142px;width:1px;height:12px;background:#a9bbd2"></div>
<div class="t" style="left:573.5px;transform:translateX(-50%);top:144.0px;font-size:9px;color:#222;-webkit-text-stroke:0.1px currentColor">Q</div>
<div class="a" style="left:743px;top:142px;width:1px;height:12px;background:#a9bbd2"></div>
<div class="t" style="left:686.0px;transform:translateX(-50%);top:144.0px;font-size:9px;color:#222;-webkit-text-stroke:0.1px currentColor">R</div>
<div class="a" style="left:861px;top:142px;width:1px;height:12px;background:#a9bbd2"></div>
<div class="t" style="left:802.0px;transform:translateX(-50%);top:144.0px;font-size:9px;color:#222;-webkit-text-stroke:0.1px currentColor">S</div>
<div class="a" style="left:983px;top:142px;width:1px;height:12px;background:#a9bbd2"></div>
<div class="t" style="left:922.0px;transform:translateX(-50%);top:144.0px;font-size:9px;color:#222;-webkit-text-stroke:0.1px currentColor">T</div>
<div class="a" style="left:0px;top:154px;width:23px;height:545px;background:#e4ecf7"></div>
<div class="a" style="left:22px;top:142px;width:1px;height:557px;background:#9eb4cf"></div>
<div class="t" style="left:11.5px;transform:translateX(-50%);top:154.1px;font-size:9.6px;color:#333;letter-spacing:-0.2px;-webkit-text-stroke:0.1px currentColor">1</div>
<div class="t" style="left:11.5px;transform:translateX(-50%);top:166.0px;font-size:9.6px;color:#333;letter-spacing:-0.2px;-webkit-text-stroke:0.1px currentColor">2</div>
<div class="t" style="left:11.5px;transform:translateX(-50%);top:177.9px;font-size:9.6px;color:#333;letter-spacing:-0.2px;-webkit-text-stroke:0.1px currentColor">3</div>
<div class="t" style="left:11.5px;transform:translateX(-50%);top:189.8px;font-size:9.6px;color:#333;letter-spacing:-0.2px;-webkit-text-stroke:0.1px currentColor">4</div>
<div class="t" style="left:11.5px;transform:translateX(-50%);top:201.7px;font-size:9.6px;color:#333;letter-spacing:-0.2px;-webkit-text-stroke:0.1px currentColor">5</div>
<div class="t" style="left:11.5px;transform:translateX(-50%);top:213.6px;font-size:9.6px;color:#333;letter-spacing:-0.2px;-webkit-text-stroke:0.1px currentColor">6</div>
<div class="t" style="left:11.5px;transform:translateX(-50%);top:225.5px;font-size:9.6px;color:#333;letter-spacing:-0.2px;-webkit-text-stroke:0.1px currentColor">7</div>
<div class="t" style="left:11.5px;transform:translateX(-50%);top:237.4px;font-size:9.6px;color:#333;letter-spacing:-0.2px;-webkit-text-stroke:0.1px currentColor">8</div>
<div class="t" style="left:11.5px;transform:translateX(-50%);top:249.3px;font-size:9.6px;color:#333;letter-spacing:-0.2px;-webkit-text-stroke:0.1px currentColor">9</div>
<div class="t" style="left:11.5px;transform:translateX(-50%);top:261.2px;font-size:9.6px;color:#333;letter-spacing:-0.2px;-webkit-text-stroke:0.1px currentColor">10</div>
<div class="t" style="left:11.5px;transform:translateX(-50%);top:273.1px;font-size:9.6px;color:#333;letter-spacing:-0.2px;-webkit-text-stroke:0.1px currentColor">11</div>
<div class="t" style="left:11.5px;transform:translateX(-50%);top:285.0px;font-size:9.6px;color:#333;letter-spacing:-0.2px;-webkit-text-stroke:0.1px currentColor">12</div>
<div class="t" style="left:11.5px;transform:translateX(-50%);top:296.9px;font-size:9.6px;color:#333;letter-spacing:-0.2px;-webkit-text-stroke:0.1px currentColor">13</div>
<div class="t" style="left:11.5px;transform:translateX(-50%);top:308.8px;font-size:9.6px;color:#333;letter-spacing:-0.2px;-webkit-text-stroke:0.1px currentColor">14</div>
<div class="t" style="left:11.5px;transform:translateX(-50%);top:320.7px;font-size:9.6px;color:#333;letter-spacing:-0.2px;-webkit-text-stroke:0.1px currentColor">15</div>
<div class="t" style="left:11.5px;transform:translateX(-50%);top:332.6px;font-size:9.6px;color:#333;letter-spacing:-0.2px;-webkit-text-stroke:0.1px currentColor">16</div>
<div class="t" style="left:11.5px;transform:translateX(-50%);top:344.5px;font-size:9.6px;color:#333;letter-spacing:-0.2px;-webkit-text-stroke:0.1px currentColor">17</div>
<div class="t" style="left:11.5px;transform:translateX(-50%);top:356.4px;font-size:9.6px;color:#333;letter-spacing:-0.2px;-webkit-text-stroke:0.1px currentColor">18</div>
<div class="t" style="left:11.5px;transform:translateX(-50%);top:368.3px;font-size:9.6px;color:#333;letter-spacing:-0.2px;-webkit-text-stroke:0.1px currentColor">19</div>
<div class="t" style="left:11.5px;transform:translateX(-50%);top:380.2px;font-size:9.6px;color:#333;letter-spacing:-0.2px;-webkit-text-stroke:0.1px currentColor">20</div>
<div class="t" style="left:11.5px;transform:translateX(-50%);top:392.1px;font-size:9.6px;color:#333;letter-spacing:-0.2px;-webkit-text-stroke:0.1px currentColor">21</div>
<div class="t" style="left:11.5px;transform:translateX(-50%);top:404.0px;font-size:9.6px;color:#333;letter-spacing:-0.2px;-webkit-text-stroke:0.1px currentColor">22</div>
<div class="t" style="left:11.5px;transform:translateX(-50%);top:415.9px;font-size:9.6px;color:#333;letter-spacing:-0.2px;-webkit-text-stroke:0.1px currentColor">23</div>
<div class="t" style="left:11.5px;transform:translateX(-50%);top:427.8px;font-size:9.6px;color:#333;letter-spacing:-0.2px;-webkit-text-stroke:0.1px currentColor">24</div>
<div class="t" style="left:11.5px;transform:translateX(-50%);top:439.7px;font-size:9.6px;color:#333;letter-spacing:-0.2px;-webkit-text-stroke:0.1px currentColor">25</div>
<div class="t" style="left:11.5px;transform:translateX(-50%);top:451.6px;font-size:9.6px;color:#333;letter-spacing:-0.2px;-webkit-text-stroke:0.1px currentColor">26</div>
<div class="t" style="left:11.5px;transform:translateX(-50%);top:463.5px;font-size:9.6px;color:#333;letter-spacing:-0.2px;-webkit-text-stroke:0.1px currentColor">27</div>
<div class="t" style="left:11.5px;transform:translateX(-50%);top:475.4px;font-size:9.6px;color:#333;letter-spacing:-0.2px;-webkit-text-stroke:0.1px currentColor">28</div>
<div class="t" style="left:11.5px;transform:translateX(-50%);top:487.3px;font-size:9.6px;color:#333;letter-spacing:-0.2px;-webkit-text-stroke:0.1px currentColor">29</div>
<div class="t" style="left:11.5px;transform:translateX(-50%);top:499.2px;font-size:9.6px;color:#333;letter-spacing:-0.2px;-webkit-text-stroke:0.1px currentColor">30</div>
<div class="t" style="left:11.5px;transform:translateX(-50%);top:511.1px;font-size:9.6px;color:#333;letter-spacing:-0.2px;-webkit-text-stroke:0.1px currentColor">31</div>
<div class="t" style="left:11.5px;transform:translateX(-50%);top:523.0px;font-size:9.6px;color:#333;letter-spacing:-0.2px;-webkit-text-stroke:0.1px currentColor">32</div>
<div class="t" style="left:11.5px;transform:translateX(-50%);top:534.9px;font-size:9.6px;color:#333;letter-spacing:-0.2px;-webkit-text-stroke:0.1px currentColor">33</div>
<div class="t" style="left:11.5px;transform:translateX(-50%);top:546.8px;font-size:9.6px;color:#333;letter-spacing:-0.2px;-webkit-text-stroke:0.1px currentColor">34</div>
<div class="t" style="left:11.5px;transform:translateX(-50%);top:558.7px;font-size:9.6px;color:#333;letter-spacing:-0.2px;-webkit-text-stroke:0.1px currentColor">35</div>
<div class="t" style="left:11.5px;transform:translateX(-50%);top:570.6px;font-size:9.6px;color:#333;letter-spacing:-0.2px;-webkit-text-stroke:0.1px currentColor">36</div>
<div class="t" style="left:11.5px;transform:translateX(-50%);top:582.5px;font-size:9.6px;color:#333;letter-spacing:-0.2px;-webkit-text-stroke:0.1px currentColor">37</div>
<div class="t" style="left:11.5px;transform:translateX(-50%);top:594.4px;font-size:9.6px;color:#333;letter-spacing:-0.2px;-webkit-text-stroke:0.1px currentColor">38</div>
<div class="t" style="left:11.5px;transform:translateX(-50%);top:606.3px;font-size:9.6px;color:#333;letter-spacing:-0.2px;-webkit-text-stroke:0.1px currentColor">39</div>
<div class="t" style="left:11.5px;transform:translateX(-50%);top:618.2px;font-size:9.6px;color:#333;letter-spacing:-0.2px;-webkit-text-stroke:0.1px currentColor">40</div>
<div class="t" style="left:11.5px;transform:translateX(-50%);top:630.1px;font-size:9.6px;color:#333;letter-spacing:-0.2px;-webkit-text-stroke:0.1px currentColor">41</div>
<div class="t" style="left:11.5px;transform:translateX(-50%);top:642.0px;font-size:9.6px;color:#333;letter-spacing:-0.2px;-webkit-text-stroke:0.1px currentColor">42</div>
<div class="t" style="left:11.5px;transform:translateX(-50%);top:653.9px;font-size:9.6px;color:#333;letter-spacing:-0.2px;-webkit-text-stroke:0.1px currentColor">43</div>
<div class="t" style="left:11.5px;transform:translateX(-50%);top:665.8px;font-size:9.6px;color:#333;letter-spacing:-0.2px;-webkit-text-stroke:0.1px currentColor">44</div>
<div class="t" style="left:11.5px;transform:translateX(-50%);top:677.7px;font-size:9.6px;color:#333;letter-spacing:-0.2px;-webkit-text-stroke:0.1px currentColor">45</div>
<div class="t" style="left:11.5px;transform:translateX(-50%);top:689.6px;font-size:9.6px;color:#333;letter-spacing:-0.2px;-webkit-text-stroke:0.1px currentColor">46</div>
<div class="a" style="left:0;top:164px;width:22px;height:1px;background:#9eb6d4"></div><div class="a" style="left:23px;top:164px;width:977px;height:1px;background:#dce3ec"></div><div class="a" style="left:0;top:176px;width:22px;height:1px;background:#9eb6d4"></div><div class="a" style="left:23px;top:176px;width:977px;height:1px;background:#dce3ec"></div><div class="a" style="left:0;top:188px;width:22px;height:1px;background:#9eb6d4"></div><div class="a" style="left:23px;top:188px;width:977px;height:1px;background:#dce3ec"></div><div class="a" style="left:0;top:200px;width:22px;height:1px;background:#9eb6d4"></div><div class="a" style="left:23px;top:200px;width:977px;height:1px;background:#dce3ec"></div><div class="a" style="left:0;top:212px;width:22px;height:1px;background:#9eb6d4"></div><div class="a" style="left:23px;top:212px;width:977px;height:1px;background:#dce3ec"></div><div class="a" style="left:0;top:224px;width:22px;height:1px;background:#9eb6d4"></div><div class="a" style="left:23px;top:224px;width:977px;height:1px;background:#dce3ec"></div><div class="a" style="left:0;top:236px;width:22px;height:1px;background:#9eb6d4"></div><div class="a" style="left:23px;top:236px;width:977px;height:1px;background:#dce3ec"></div><div class="a" style="left:0;top:247px;width:22px;height:1px;background:#9eb6d4"></div><div class="a" style="left:23px;top:247px;width:977px;height:1px;background:#dce3ec"></div><div class="a" style="left:0;top:259px;width:22px;height:1px;background:#9eb6d4"></div><div class="a" style="left:23px;top:259px;width:977px;height:1px;background:#dce3ec"></div><div class="a" style="left:0;top:271px;width:22px;height:1px;background:#9eb6d4"></div><div class="a" style="left:23px;top:271px;width:977px;height:1px;background:#dce3ec"></div><div class="a" style="left:0;top:283px;width:22px;height:1px;background:#9eb6d4"></div><div class="a" style="left:23px;top:283px;width:977px;height:1px;background:#dce3ec"></div><div class="a" style="left:0;top:295px;width:22px;height:1px;background:#9eb6d4"></div><div class="a" style="left:23px;top:295px;width:977px;height:1px;background:#dce3ec"></div><div class="a" style="left:0;top:307px;width:22px;height:1px;background:#9eb6d4"></div><div class="a" style="left:23px;top:307px;width:977px;height:1px;background:#dce3ec"></div><div class="a" style="left:0;top:319px;width:22px;height:1px;background:#9eb6d4"></div><div class="a" style="left:23px;top:319px;width:977px;height:1px;background:#dce3ec"></div><div class="a" style="left:0;top:331px;width:22px;height:1px;background:#9eb6d4"></div><div class="a" style="left:23px;top:331px;width:977px;height:1px;background:#dce3ec"></div><div class="a" style="left:0;top:343px;width:22px;height:1px;background:#9eb6d4"></div><div class="a" style="left:23px;top:343px;width:977px;height:1px;background:#dce3ec"></div><div class="a" style="left:0;top:355px;width:22px;height:1px;background:#9eb6d4"></div><div class="a" style="left:23px;top:355px;width:977px;height:1px;background:#dce3ec"></div><div class="a" style="left:0;top:367px;width:22px;height:1px;background:#9eb6d4"></div><div class="a" style="left:23px;top:367px;width:977px;height:1px;background:#dce3ec"></div><div class="a" style="left:0;top:378px;width:22px;height:1px;background:#9eb6d4"></div><div class="a" style="left:23px;top:378px;width:977px;height:1px;background:#dce3ec"></div><div class="a" style="left:0;top:390px;width:22px;height:1px;background:#9eb6d4"></div><div class="a" style="left:23px;top:390px;width:977px;height:1px;background:#dce3ec"></div><div class="a" style="left:0;top:402px;width:22px;height:1px;background:#9eb6d4"></div><div class="a" style="left:23px;top:402px;width:977px;height:1px;background:#dce3ec"></div><div class="a" style="left:0;top:414px;width:22px;height:1px;background:#9eb6d4"></div><div class="a" style="left:23px;top:414px;width:977px;height:1px;background:#dce3ec"></div><div class="a" style="left:0;top:426px;width:22px;height:1px;background:#9eb6d4"></div><div class="a" style="left:23px;top:426px;width:977px;height:1px;background:#dce3ec"></div><div class="a" style="left:0;top:438px;width:22px;height:1px;background:#9eb6d4"></div><div class="a" style="left:23px;top:438px;width:977px;height:1px;background:#dce3ec"></div><div class="a" style="left:0;top:450px;width:22px;height:1px;background:#9eb6d4"></div><div class="a" style="left:23px;top:450px;width:977px;height:1px;background:#dce3ec"></div><div class="a" style="left:0;top:462px;width:22px;height:1px;background:#9eb6d4"></div><div class="a" style="left:23px;top:462px;width:977px;height:1px;background:#dce3ec"></div><div class="a" style="left:0;top:474px;width:22px;height:1px;background:#9eb6d4"></div><div class="a" style="left:23px;top:474px;width:977px;height:1px;background:#dce3ec"></div><div class="a" style="left:0;top:485px;width:22px;height:1px;background:#9eb6d4"></div><div class="a" style="left:23px;top:485px;width:977px;height:1px;background:#dce3ec"></div><div class="a" style="left:0;top:497px;width:22px;height:1px;background:#9eb6d4"></div><div class="a" style="left:23px;top:497px;width:977px;height:1px;background:#dce3ec"></div><div class="a" style="left:0;top:509px;width:22px;height:1px;background:#9eb6d4"></div><div class="a" style="left:23px;top:509px;width:977px;height:1px;background:#dce3ec"></div><div class="a" style="left:0;top:521px;width:22px;height:1px;background:#9eb6d4"></div><div class="a" style="left:23px;top:521px;width:977px;height:1px;background:#dce3ec"></div><div class="a" style="left:0;top:533px;width:22px;height:1px;background:#9eb6d4"></div><div class="a" style="left:23px;top:533px;width:977px;height:1px;background:#dce3ec"></div><div class="a" style="left:0;top:545px;width:22px;height:1px;background:#9eb6d4"></div><div class="a" style="left:23px;top:545px;width:977px;height:1px;background:#dce3ec"></div><div class="a" style="left:0;top:557px;width:22px;height:1px;background:#9eb6d4"></div><div class="a" style="left:23px;top:557px;width:977px;height:1px;background:#dce3ec"></div><div class="a" style="left:0;top:569px;width:22px;height:1px;background:#9eb6d4"></div><div class="a" style="left:23px;top:569px;width:977px;height:1px;background:#dce3ec"></div><div class="a" style="left:0;top:581px;width:22px;height:1px;background:#9eb6d4"></div><div class="a" style="left:23px;top:581px;width:977px;height:1px;background:#dce3ec"></div><div class="a" style="left:0;top:593px;width:22px;height:1px;background:#9eb6d4"></div><div class="a" style="left:23px;top:593px;width:977px;height:1px;background:#dce3ec"></div><div class="a" style="left:0;top:605px;width:22px;height:1px;background:#9eb6d4"></div><div class="a" style="left:23px;top:605px;width:977px;height:1px;background:#dce3ec"></div><div class="a" style="left:0;top:616px;width:22px;height:1px;background:#9eb6d4"></div><div class="a" style="left:23px;top:616px;width:977px;height:1px;background:#dce3ec"></div><div class="a" style="left:0;top:628px;width:22px;height:1px;background:#9eb6d4"></div><div class="a" style="left:23px;top:628px;width:977px;height:1px;background:#dce3ec"></div><div class="a" style="left:0;top:640px;width:22px;height:1px;background:#9eb6d4"></div><div class="a" style="left:23px;top:640px;width:977px;height:1px;background:#dce3ec"></div><div class="a" style="left:0;top:652px;width:22px;height:1px;background:#9eb6d4"></div><div class="a" style="left:23px;top:652px;width:977px;height:1px;background:#dce3ec"></div><div class="a" style="left:0;top:664px;width:22px;height:1px;background:#9eb6d4"></div><div class="a" style="left:23px;top:664px;width:977px;height:1px;background:#dce3ec"></div><div class="a" style="left:0;top:676px;width:22px;height:1px;background:#9eb6d4"></div><div class="a" style="left:23px;top:676px;width:977px;height:1px;background:#dce3ec"></div><div class="a" style="left:0;top:688px;width:22px;height:1px;background:#9eb6d4"></div><div class="a" style="left:23px;top:688px;width:977px;height:1px;background:#dce3ec"></div><div class="a" style="left:0;top:700px;width:22px;height:1px;background:#9eb6d4"></div><div class="a" style="left:23px;top:700px;width:977px;height:1px;background:#dce3ec"></div>
<div class="a" style="left:70px;top:154px;width:1px;height:544px;background:#dce3ec"></div>
<div class="a" style="left:180px;top:154px;width:1px;height:544px;background:#dce3ec"></div>
<div class="a" style="left:294px;top:154px;width:1px;height:544px;background:#dce3ec"></div>
<div class="a" style="left:404px;top:154px;width:1px;height:544px;background:#dce3ec"></div>
<div class="a" style="left:518px;top:154px;width:1px;height:544px;background:#dce3ec"></div>
<div class="a" style="left:629px;top:154px;width:1px;height:544px;background:#dce3ec"></div>
<div class="a" style="left:743px;top:154px;width:1px;height:544px;background:#dce3ec"></div>
<div class="a" style="left:861px;top:154px;width:1px;height:544px;background:#dce3ec"></div>
<div class="a" style="left:983px;top:154px;width:1px;height:544px;background:#dce3ec"></div>
<div class="a" style="left:0;top:0;width:999px;height:698px;overflow:hidden">
<div class="a" style="left:27px;top:159px;width:1000px;height:208px;background:#fff;border:1px solid #8d8d8d"></div>
<div class="t" style="left:578.7px;transform:translateX(-50%);top:168.2px;font-size:12.5px;color:#111;font-weight:bold;-webkit-text-stroke:0.05px currentColor;">Vendas por tipo de equipamento</div>
<svg class="a" style="left:0px;top:0px;width:1000px;height:400px" width="1000" height="400" viewBox="0 0 1000 400"><line x1="63" y1="192.4" x2="1000" y2="192.4" stroke="#878787" stroke-width="1"/><text x="54" y="195.0" font-size="7.6" text-anchor="end" font-family="Liberation Sans" fill="#111" stroke="#111" stroke-width="0.1">200000</text><line x1="63" y1="207.8" x2="1000" y2="207.8" stroke="#878787" stroke-width="1"/><text x="54" y="210.4" font-size="7.6" text-anchor="end" font-family="Liberation Sans" fill="#111" stroke="#111" stroke-width="0.1">180000</text><line x1="63" y1="223.1" x2="1000" y2="223.1" stroke="#878787" stroke-width="1"/><text x="54" y="225.7" font-size="7.6" text-anchor="end" font-family="Liberation Sans" fill="#111" stroke="#111" stroke-width="0.1">160000</text><line x1="63" y1="238.5" x2="1000" y2="238.5" stroke="#878787" stroke-width="1"/><text x="54" y="241.1" font-size="7.6" text-anchor="end" font-family="Liberation Sans" fill="#111" stroke="#111" stroke-width="0.1">140000</text><line x1="63" y1="253.8" x2="1000" y2="253.8" stroke="#878787" stroke-width="1"/><text x="54" y="256.4" font-size="7.6" text-anchor="end" font-family="Liberation Sans" fill="#111" stroke="#111" stroke-width="0.1">120000</text><line x1="63" y1="269.2" x2="1000" y2="269.2" stroke="#878787" stroke-width="1"/><text x="54" y="271.8" font-size="7.6" text-anchor="end" font-family="Liberation Sans" fill="#111" stroke="#111" stroke-width="0.1">100000</text><line x1="63" y1="284.6" x2="1000" y2="284.6" stroke="#878787" stroke-width="1"/><text x="54" y="287.2" font-size="7.6" text-anchor="end" font-family="Liberation Sans" fill="#111" stroke="#111" stroke-width="0.1">80000</text><line x1="63" y1="299.9" x2="1000" y2="299.9" stroke="#878787" stroke-width="1"/><text x="54" y="302.5" font-size="7.6" text-anchor="end" font-family="Liberation Sans" fill="#111" stroke="#111" stroke-width="0.1">60000</text><line x1="63" y1="315.3" x2="1000" y2="315.3" stroke="#878787" stroke-width="1"/><text x="54" y="317.9" font-size="7.6" text-anchor="end" font-family="Liberation Sans" fill="#111" stroke="#111" stroke-width="0.1">40000</text><line x1="63" y1="330.6" x2="1000" y2="330.6" stroke="#878787" stroke-width="1"/><text x="54" y="333.2" font-size="7.6" text-anchor="end" font-family="Liberation Sans" fill="#111" stroke="#111" stroke-width="0.1">20000</text><line x1="63" y1="346.0" x2="1000" y2="346.0" stroke="#878787" stroke-width="1"/><text x="54" y="348.6" font-size="7.6" text-anchor="end" font-family="Liberation Sans" fill="#111" stroke="#111" stroke-width="0.1">0</text><line x1="63" y1="192.4" x2="63" y2="346" stroke="#878787"/><rect x="80" y="336.8" width="62" height="6.7" fill="#c0504d"/><rect x="80" y="342.9" width="62" height="3.1" fill="#4f81bd"/><text x="111" y="358.6" font-size="7.4" text-anchor="middle" font-family="Liberation Sans" fill="#111" stroke="#111" stroke-width="0.1">Março</text><rect x="177" y="325.3" width="62" height="14.4" fill="#c0504d"/><rect x="177" y="339.1" width="62" height="6.9" fill="#4f81bd"/><text x="208" y="358.6" font-size="7.4" text-anchor="middle" font-family="Liberation Sans" fill="#111" stroke="#111" stroke-width="0.1">Abril</text><rect x="273.3" y="320.7" width="62" height="17.5" fill="#c0504d"/><rect x="273.3" y="337.6" width="62" height="8.4" fill="#4f81bd"/><text x="304.3" y="358.6" font-size="7.4" text-anchor="middle" font-family="Liberation Sans" fill="#111" stroke="#111" stroke-width="0.1">Maio</text><rect x="370" y="317.6" width="62" height="20.2" fill="#c0504d"/><rect x="370" y="337.2" width="62" height="8.8" fill="#4f81bd"/><text x="401" y="358.6" font-size="7.4" text-anchor="middle" font-family="Liberation Sans" fill="#111" stroke="#111" stroke-width="0.1">Junho</text><rect x="466.5" y="299.9" width="62" height="37.1" fill="#c0504d"/><rect x="466.5" y="336.4" width="62" height="9.6" fill="#4f81bd"/><text x="497.5" y="358.6" font-size="7.4" text-anchor="middle" font-family="Liberation Sans" fill="#111" stroke="#111" stroke-width="0.1">Julho</text><rect x="563.6" y="271.5" width="62" height="62.8" fill="#c0504d"/><rect x="563.6" y="333.7" width="62" height="12.3" fill="#4f81bd"/><text x="594.6" y="358.6" font-size="7.4" text-anchor="middle" font-family="Liberation Sans" fill="#111" stroke="#111" stroke-width="0.1">Agosto</text><rect x="660.2" y="204.6" width="62" height="1" fill="#8064a2"/><rect x="660.2" y="205.4" width="62" height="4.3" fill="#9bbb59"/><rect x="660.2" y="209.1" width="62" height="109.5" fill="#c0504d"/><rect x="660.2" y="318.0" width="62" height="28.0" fill="#4f81bd"/><text x="691.2" y="358.6" font-size="7.4" text-anchor="middle" font-family="Liberation Sans" fill="#111" stroke="#111" stroke-width="0.1">Setembro</text><rect x="756.5" y="214.4" width="62" height="1" fill="#8064a2"/><rect x="756.5" y="215.2" width="62" height="1.6" fill="#9bbb59"/><rect x="756.5" y="216.2" width="62" height="107.6" fill="#c0504d"/><rect x="756.5" y="323.2" width="62" height="22.8" fill="#4f81bd"/><text x="787.5" y="358.6" font-size="7.4" text-anchor="middle" font-family="Liberation Sans" fill="#111" stroke="#111" stroke-width="0.1">Outubro</text><rect x="853.6" y="214.7" width="62" height="1" fill="#8064a2"/><rect x="853.6" y="215.5" width="62" height="0.8" fill="#9bbb59"/><rect x="853.6" y="215.7" width="62" height="108.8" fill="#c0504d"/><rect x="853.6" y="324.0" width="62" height="22.0" fill="#4f81bd"/><text x="884.6" y="358.6" font-size="7.4" text-anchor="middle" font-family="Liberation Sans" fill="#111" stroke="#111" stroke-width="0.1">Novembro</text><rect x="949.8" y="225.2" width="62" height="1" fill="#8064a2"/><rect x="949.8" y="226.0" width="62" height="1.5" fill="#9bbb59"/><rect x="949.8" y="227.0" width="62" height="88.2" fill="#c0504d"/><rect x="949.8" y="314.5" width="62" height="31.5" fill="#4f81bd"/><text x="980.8" y="358.6" font-size="7.4" text-anchor="middle" font-family="Liberation Sans" fill="#111" stroke="#111" stroke-width="0.1">Dezembro</text></svg>
<div class="a" style="left:26px;top:371px;width:364px;height:307px;background:#fff;border:1px solid #8d8d8d"></div>
<div class="t" style="left:206.0px;transform:translateX(-50%);top:380.3px;font-size:12.4px;color:#111;font-weight:bold;-webkit-text-stroke:0.05px currentColor;">Vendas por tipo de dia</div>
<svg class="a" style="left:50px;top:430px;" width="230" height="230" viewBox="0 0 230 230"><path d="M111.00 111.50 L111.00 11.50 A100 100 0 1 1 80.10 16.39 Z" fill="#4f81bd" stroke="#4f81bd" stroke-width="0.3"/><path d="M111.00 111.50 L80.10 16.39 A100 100 0 0 1 83.10 15.47 Z" fill="#c0504d" stroke="#c0504d" stroke-width="0.3"/><path d="M111.00 111.50 L83.10 15.47 A100 100 0 0 1 111.00 11.50 Z" fill="#9bbb59" stroke="#9bbb59" stroke-width="0.3"/></svg>
<div class="t" style="left:129.0px;transform:translateX(-50%);top:436.7px;font-size:7.4px;color:#111;-webkit-text-stroke:0.12px currentColor">0%</div>
<div class="t" style="left:147.0px;transform:translateX(-50%);top:448.1px;font-size:7.4px;color:#111;-webkit-text-stroke:0.12px currentColor">5%</div>
<div class="t" style="left:179.5px;transform:translateX(-50%);top:622.7px;font-size:7.4px;color:#111;-webkit-text-stroke:0.12px currentColor">95%</div>
<div class="a" style="left:279px;top:479.5px;width:5px;height:5px;background:#4f81bd"></div>
<div class="t" style="left:286.0px;top:478.5px;font-size:7.2px;color:#111;-webkit-text-stroke:0.12px currentColor">Dia útil</div>
<div class="a" style="left:279px;top:514.1px;width:5px;height:5px;background:#c0504d"></div>
<div class="t" style="left:286.0px;top:513.1px;font-size:7.2px;color:#111;-webkit-text-stroke:0.12px currentColor">Feriado</div>
<div class="a" style="left:279px;top:548.2px;width:5px;height:5px;background:#9bbb59"></div>
<div class="t" style="left:286.0px;top:547.2px;font-size:7.2px;color:#111;-webkit-text-stroke:0.12px currentColor">Fim de semana</div>
<div class="a" style="left:869px;top:374px;width:200px;height:330px;background:#fff;border:1px solid #8d8d8d"></div>
<svg class="a" style="left:0px;top:0px;width:1000px;height:700px" width="1000" height="700" viewBox="0 0 1000 700"><line x1="906.5" y1="407.7" x2="1000" y2="407.7" stroke="#878787"/><text x="898" y="410.3" font-size="7.6" text-anchor="end" font-family="Liberation Sans" fill="#111" stroke="#111" stroke-width="0.1">900000</text><line x1="906.5" y1="439.2" x2="1000" y2="439.2" stroke="#878787"/><text x="898" y="441.8" font-size="7.6" text-anchor="end" font-family="Liberation Sans" fill="#111" stroke="#111" stroke-width="0.1">800000</text><line x1="906.5" y1="470.8" x2="1000" y2="470.8" stroke="#878787"/><text x="898" y="473.4" font-size="7.6" text-anchor="end" font-family="Liberation Sans" fill="#111" stroke="#111" stroke-width="0.1">700000</text><line x1="906.5" y1="502.3" x2="1000" y2="502.3" stroke="#878787"/><text x="898" y="504.9" font-size="7.6" text-anchor="end" font-family="Liberation Sans" fill="#111" stroke="#111" stroke-width="0.1">600000</text><line x1="906.5" y1="533.8" x2="1000" y2="533.8" stroke="#878787"/><text x="898" y="536.4" font-size="7.6" text-anchor="end" font-family="Liberation Sans" fill="#111" stroke="#111" stroke-width="0.1">500000</text><line x1="906.5" y1="565.4" x2="1000" y2="565.4" stroke="#878787"/><text x="898" y="568.0" font-size="7.6" text-anchor="end" font-family="Liberation Sans" fill="#111" stroke="#111" stroke-width="0.1">400000</text><line x1="906.5" y1="596.9" x2="1000" y2="596.9" stroke="#878787"/><text x="898" y="599.5" font-size="7.6" text-anchor="end" font-family="Liberation Sans" fill="#111" stroke="#111" stroke-width="0.1">300000</text><line x1="906.5" y1="628.4" x2="1000" y2="628.4" stroke="#878787"/><text x="898" y="631.0" font-size="7.6" text-anchor="end" font-family="Liberation Sans" fill="#111" stroke="#111" stroke-width="0.1">200000</text><line x1="906.5" y1="660.0" x2="1000" y2="660.0" stroke="#878787"/><text x="898" y="662.6" font-size="7.6" text-anchor="end" font-family="Liberation Sans" fill="#111" stroke="#111" stroke-width="0.1">100000</text><line x1="906.5" y1="691.5" x2="1000" y2="691.5" stroke="#878787"/><text x="898" y="694.1" font-size="7.6" text-anchor="end" font-family="Liberation Sans" fill="#111" stroke="#111" stroke-width="0.1">0</text><line x1="906.5" y1="407.7" x2="906.5" y2="691.5" stroke="#878787"/><rect x="920" y="689.5" width="47" height="2" fill="#b0b0a0"/><rect x="992" y="682" width="8" height="4" fill="#b9cf8f"/><rect x="992" y="686" width="8" height="1" fill="#d08070"/><rect x="992" y="687" width="8" height="5" fill="#8eaad6"/></svg>
<div class="a" style="left:393px;top:368px;width:477px;height:340px;background:#e8fafd;border:1px solid #b9c6c9"></div>
<div class="a" style="left:399px;top:372.5px;width:466px;height:330px;background:#fff;border:1px solid #9aa6a8"></div>
<svg class="a" style="left:622px;top:369px;" width="12" height="3" viewBox="0 0 12 3"><circle cx="1.5" cy="1.5" r="0.9" fill="#555"/><circle cx="4.5" cy="1.5" r="0.9" fill="#555"/><circle cx="7.5" cy="1.5" r="0.9" fill="#555"/><circle cx="10.5" cy="1.5" r="0.9" fill="#555"/></svg>
<svg class="a" style="left:395px;top:541px;" width="3" height="12" viewBox="0 0 3 12"><circle cx="1.5" cy="1.5" r="0.9" fill="#555"/><circle cx="1.5" cy="4.5" r="0.9" fill="#555"/><circle cx="1.5" cy="7.5" r="0.9" fill="#555"/><circle cx="1.5" cy="10.5" r="0.9" fill="#555"/></svg>
<svg class="a" style="left:866px;top:541px;" width="3" height="12" viewBox="0 0 3 12"><circle cx="1.5" cy="1.5" r="0.9" fill="#555"/><circle cx="1.5" cy="4.5" r="0.9" fill="#555"/><circle cx="1.5" cy="7.5" r="0.9" fill="#555"/><circle cx="1.5" cy="10.5" r="0.9" fill="#555"/></svg>
<svg class="a" style="left:395px;top:369px;" width="6" height="6" viewBox="0 0 6 6"><circle cx="1.5" cy="1.5" r="0.9" fill="#555"/><circle cx="4.5" cy="1.5" r="0.9" fill="#555"/><circle cx="1.5" cy="4.5" r="0.9" fill="#555"/></svg>
<svg class="a" style="left:863px;top:369px;" width="6" height="6" viewBox="0 0 6 6"><circle cx="1.5" cy="1.5" r="0.9" fill="#555"/><circle cx="4.5" cy="1.5" r="0.9" fill="#555"/><circle cx="4.5" cy="4.5" r="0.9" fill="#555"/></svg>
<div class="t" style="left:631.5px;transform:translateX(-50%);top:381.8px;font-size:12.4px;color:#111;font-weight:bold;-webkit-text-stroke:0.05px currentColor;">Vendas por dia da semana</div>
<svg class="a" style="left:420px;top:400px;" width="320" height="320" viewBox="0 0 320 320"><path d="M157.80 158.00 L157.80 11.50 A146.5 146.5 0 0 1 298.22 116.24 Z" fill="#4572a7" stroke="#4572a7" stroke-width="0.3"/><path d="M157.80 158.00 L298.22 116.24 A146.5 146.5 0 0 1 254.68 267.89 Z" fill="#aa4643" stroke="#aa4643" stroke-width="0.3"/><path d="M157.80 158.00 L254.68 267.89 A146.5 146.5 0 0 1 96.26 290.95 Z" fill="#89a54e" stroke="#89a54e" stroke-width="0.3"/><path d="M157.80 158.00 L96.26 290.95 A146.5 146.5 0 0 1 11.30 158.00 Z" fill="#71588f" stroke="#71588f" stroke-width="0.3"/><path d="M157.80 158.00 L11.30 158.00 A146.5 146.5 0 0 1 113.41 18.39 Z" fill="#4198af" stroke="#4198af" stroke-width="0.3"/><path d="M157.80 158.00 L113.41 18.39 A146.5 146.5 0 0 1 135.79 13.16 Z" fill="#db843d" stroke="#db843d" stroke-width="0.3"/><path d="M157.80 158.00 L135.79 13.16 A146.5 146.5 0 0 1 157.80 11.50 Z" fill="#93a9cf" stroke="#93a9cf" stroke-width="0.3"/></svg>
<div class="t" style="left:656.8px;transform:translateX(-50%);top:445.6px;font-size:7.4px;color:#111;-webkit-text-stroke:0.12px currentColor">20%</div>
<div class="t" style="left:707.0px;transform:translateX(-50%);top:590.0px;font-size:7.4px;color:#111;-webkit-text-stroke:0.12px currentColor">19%</div>
<div class="t" style="left:596.8px;transform:translateX(-50%);top:690.1px;font-size:7.4px;color:#111;-webkit-text-stroke:0.12px currentColor">18%</div>
<div class="t" style="left:462.5px;transform:translateX(-50%);top:625.6px;font-size:7.4px;color:#111;-webkit-text-stroke:0.12px currentColor">18%</div>
<div class="t" style="left:467.8px;transform:translateX(-50%);top:476.6px;font-size:7.4px;color:#111;-webkit-text-stroke:0.12px currentColor">20%</div>
<div class="t" style="left:547.0px;transform:translateX(-50%);top:420.2px;font-size:7.4px;color:#111;-webkit-text-stroke:0.12px currentColor">3%</div>
<div class="t" style="left:567.0px;transform:translateX(-50%);top:417.6px;font-size:7.4px;color:#111;-webkit-text-stroke:0.12px currentColor">2%</div>
<div class="a" style="left:778px;top:478.5px;width:5px;height:5px;background:#4572a7"></div>
<div class="t" style="left:785.0px;top:477.6px;font-size:7.1px;color:#111;-webkit-text-stroke:0.12px currentColor">Segunda-feira</div>
<div class="a" style="left:778px;top:502.15px;width:5px;height:5px;background:#aa4643"></div>
<div class="t" style="left:785.0px;top:501.2px;font-size:7.1px;color:#111;-webkit-text-stroke:0.12px currentColor">Terça-feira</div>
<div class="a" style="left:778px;top:525.8px;width:5px;height:5px;background:#89a54e"></div>
<div class="t" style="left:785.0px;top:524.9px;font-size:7.1px;color:#111;-webkit-text-stroke:0.12px currentColor">Quarta-feira</div>
<div class="a" style="left:778px;top:549.45px;width:5px;height:5px;background:#71588f"></div>
<div class="t" style="left:785.0px;top:548.5px;font-size:7.1px;color:#111;-webkit-text-stroke:0.12px currentColor">Quinta-feira</div>
<div class="a" style="left:778px;top:573.1px;width:5px;height:5px;background:#4198af"></div>
<div class="t" style="left:785.0px;top:572.2px;font-size:7.1px;color:#111;-webkit-text-stroke:0.12px currentColor">Sexta-feira</div>
<div class="a" style="left:778px;top:596.75px;width:5px;height:5px;background:#db843d"></div>
<div class="t" style="left:785.0px;top:595.8px;font-size:7.1px;color:#111;-webkit-text-stroke:0.12px currentColor">Sábado</div>
<div class="a" style="left:778px;top:620.4px;width:5px;height:5px;background:#93a9cf"></div>
<div class="t" style="left:785.0px;top:619.5px;font-size:7.1px;color:#111;-webkit-text-stroke:0.12px currentColor">Domingo</div>
<div class="a" style="left:827px;top:407px;width:58px;height:16px;background:linear-gradient(180deg,#ffffff,#e4e8ee);border:1px solid #7a7f86;border-radius:2px;box-shadow:1px 1px 1px rgba(0,0,0,.2)"></div>
<div class="t" style="left:832.5px;top:410.6px;font-size:9.8px;color:#606060;-webkit-text-stroke:0.1px currentColor">Chart Area</div>
</div>
<div class="a" style="left:999px;top:142px;width:14px;height:557px;background:#7f9dc9"></div>
<div class="a" style="left:1000px;top:143px;width:12px;height:6px;border:1px solid #6e89b5;background:linear-gradient(180deg,#f8fbff,#d9e4f2)"></div>
<svg class="a" style="left:1002px;top:155px;" width="8" height="4" viewBox="0 0 8 4"><path d="M0 4L4 0L8 4Z" fill="#3b5584"/></svg>
<div class="a" style="left:1000px;top:165px;width:12px;height:155px;border:1px solid #6f87ad;border-radius:2px;background:linear-gradient(90deg,#eef2fa 0,#e4eaf5 50%,#cdd7e8 100%)"></div>
<svg class="a" style="left:1002px;top:240px;" width="8" height="6" viewBox="0 0 8 6"><path d="M0 0.5H8M0 2.5H8M0 4.5H8" stroke="#8a9ab4" stroke-width="0.8"/></svg>
<svg class="a" style="left:1002px;top:688px;" width="8" height="4" viewBox="0 0 8 4"><path d="M0 0H8L4 4Z" fill="#3b5584"/></svg>
<div class="a" style="left:1012px;top:142px;width:1px;height:570px;background:#6f8fbd"></div>
<div class="a" style="left:1013px;top:142px;width:211px;height:570px;background:#d6e4f5"></div>
<div class="a" style="left:1013px;top:142px;width:1px;height:570px;background:#6f8fbd"></div>
<div class="a" style="left:1014px;top:142px;width:1px;height:570px;background:#eef4fb"></div>
<div class="a" style="left:1222px;top:142px;width:2px;height:570px;background:#b9cde6"></div>
<div class="a" style="left:1015px;top:145px;width:207px;height:15px;background:linear-gradient(180deg,#cbddf3 0,#c0d6f0 100%)"></div>
<div class="t" style="left:1016.8px;top:148.2px;font-size:10px;color:#2e5a9c;">PivotTable Field List</div>
<svg class="a" style="left:1196px;top:151px;" width="8" height="5" viewBox="0 0 8 5"><path d="M0 0H8L4 5Z" fill="#1b3c80"/></svg>
<svg class="a" style="left:1211px;top:149px;" width="8" height="8" viewBox="0 0 8 8"><path d="M0.5 0.5L7.5 7.5M7.5 0.5L0.5 7.5" stroke="#1b3c80" stroke-width="1.6"/></svg>
<div class="a" style="left:1182px;top:167px;width:34px;height:20px;border:1px solid #8c9aac;border-radius:2px;background:linear-gradient(180deg,#fdfdfe 0,#eef1f5 50%,#dfe4ea 100%)"></div>
<svg class="a" style="left:1185px;top:169px;" width="16" height="16" viewBox="0 0 16 16"><rect x="2" y="3" width="6" height="11" fill="#e8eef8" stroke="#5a7ab0"/><rect x="8" y="5" width="6" height="10" fill="#e8eef8" stroke="#5a7ab0"/><rect x="3" y="1" width="10" height="3" fill="#7aa0e0"/><path d="M4 7H7M10 8H13M10 11H13" stroke="#7a90b8"/></svg>
<svg class="a" style="left:1204px;top:175px;" width="7" height="4" viewBox="0 0 7 4"><path d="M0 0H7L3.5 4Z" fill="#111"/></svg>
<div class="t" style="left:1020.4px;top:177.6px;font-size:9.33px;color:#1e1e1e;">Choose fields to add to report:</div>
<div class="a" style="left:1020px;top:194px;width:197px;height:246px;background:#fff;border:1px solid #8ea4c2;overflow:hidden"></div>
<div class="a" style="left:1203px;top:195px;width:13px;height:244px;background:#f2f2f2"></div>
<svg class="a" style="left:1206px;top:200px;" width="7" height="4" viewBox="0 0 7 4"><path d="M0 4L3.5 0L7 4Z" fill="#222"/></svg>
<div class="a" style="left:1203px;top:210px;width:12px;height:16px;border:1px solid #9a9a9a;border-radius:1px;background:linear-gradient(90deg,#fff,#ececec)"></div>
<svg class="a" style="left:1206px;top:214px;" width="6" height="8" viewBox="0 0 6 8"><path d="M0 1H6M0 4H6M0 7H6" stroke="#888" stroke-width="1"/></svg>
<svg class="a" style="left:1206px;top:431px;" width="7" height="4" viewBox="0 0 7 4"><path d="M0 0H7L3.5 4Z" fill="#222"/></svg>
<div class="a" style="left:1024px;top:197px;width:9px;height:9px;border:1px solid #7f95b4;border-radius:1px;background:linear-gradient(180deg,#fff,#d6deea)"></div>
<div class="a" style="left:1026px;top:201px;width:5px;height:1px;background:#334"></div>
<div class="t" style="left:1038.0px;top:196.4px;font-size:12px;color:#111;font-weight:bold;-webkit-text-stroke:0.05px currentColor;">Σ</div>
<div class="t" style="left:1051.9px;top:196.8px;font-size:10px;color:#111;font-weight:bold;-webkit-text-stroke:0.05px currentColor;">Informacao Vendas</div>
<div class="a" style="left:1051px;top:211px;width:11px;height:11px;border:1px solid #9aa2ac;background:linear-gradient(135deg,#d8dce2 0,#eef0f3 55%,#fbfbfc 100%)"></div>
<div class="t" style="left:1063.5px;top:212.3px;font-size:9.1px;color:#1e1e1e;">Informacao Vendas Count</div>
<div class="a" style="left:1051px;top:229px;width:11px;height:11px;border:1px solid #9aa2ac;background:linear-gradient(135deg,#d8dce2 0,#eef0f3 55%,#fbfbfc 100%)"></div>
<div class="t" style="left:1063.5px;top:230.1px;font-size:9.1px;color:#1e1e1e;">Preco Produto</div>
<div class="a" style="left:1051px;top:247px;width:11px;height:11px;border:1px solid #9aa2ac;background:linear-gradient(135deg,#d8dce2 0,#eef0f3 55%,#fbfbfc 100%)"></div>
<div class="t" style="left:1063.5px;top:248.1px;font-size:9.1px;color:#1e1e1e;">Preco Venda</div>
<div class="a" style="left:1051px;top:265px;width:11px;height:11px;border:1px solid #9aa2ac;background:linear-gradient(135deg,#d8dce2 0,#eef0f3 55%,#fbfbfc 100%)"></div>
<svg class="a" style="left:1053px;top:266px;" width="8" height="9" viewBox="0 0 8 9"><path d="M1 5 L3 8 L7 1" stroke="#2a3f8f" stroke-width="1.5" fill="none"/></svg>
<div class="t" style="left:1064.2px;top:265.5px;font-size:10px;color:#111;font-weight:bold;-webkit-text-stroke:0.05px currentColor;">Quantidade Entregue</div>
<div class="a" style="left:1051px;top:282px;width:11px;height:11px;border:1px solid #9aa2ac;background:linear-gradient(135deg,#d8dce2 0,#eef0f3 55%,#fbfbfc 100%)"></div>
<div class="t" style="left:1063.5px;top:283.6px;font-size:9.1px;color:#1e1e1e;">Quantidade Pedida</div>
<div class="a" style="left:1038px;top:302px;width:147px;height:1px;background:#9ab6e0"></div>
<div class="a" style="left:1024px;top:310px;width:9px;height:9px;border:1px solid #7f95b4;border-radius:1px;background:linear-gradient(180deg,#fff,#d6deea)"></div>
<div class="a" style="left:1026px;top:314px;width:5px;height:1px;background:#334"></div>
<svg class="a" style="left:1037px;top:308px;" width="10" height="14" viewBox="0 0 10 14"><rect x="0.5" y="0.5" width="9" height="13" fill="#f4f8fe" stroke="#6a8ac0"/><rect x="0.5" y="0.5" width="9" height="2.5" fill="#5a84d0"/><path d="M2 5.5H8M2 8H8M2 10.5H8" stroke="#9ab0d6" stroke-width="0.8"/></svg>
<div class="t" style="left:1050.8px;top:310.2px;font-size:9.1px;color:#1e1e1e;">Chapa</div>
<div class="a" style="left:1051px;top:324px;width:11px;height:11px;border:1px solid #9aa2ac;background:linear-gradient(135deg,#d8dce2 0,#eef0f3 55%,#fbfbfc 100%)"></div>
<div class="t" style="left:1063.5px;top:325.6px;font-size:9.1px;color:#1e1e1e;">Chapa</div>
<div class="a" style="left:1038px;top:343px;width:147px;height:1px;background:#9ab6e0"></div>
<div class="a" style="left:1024px;top:352px;width:9px;height:9px;border:1px solid #7f95b4;border-radius:1px;background:linear-gradient(180deg,#fff,#d6deea)"></div>
<div class="a" style="left:1026px;top:356px;width:5px;height:1px;background:#334"></div>
<svg class="a" style="left:1037px;top:349px;" width="10" height="14" viewBox="0 0 10 14"><rect x="0.5" y="0.5" width="9" height="13" fill="#f4f8fe" stroke="#6a8ac0"/><rect x="0.5" y="0.5" width="9" height="2.5" fill="#5a84d0"/><path d="M2 5.5H8M2 8H8M2 10.5H8" stroke="#9ab0d6" stroke-width="0.8"/></svg>
<div class="t" style="left:1051.4px;top:351.1px;font-size:10.2px;color:#111;font-weight:bold;-webkit-text-stroke:0.05px currentColor;">Data Venda</div>
<div class="a" style="left:1051px;top:366px;width:11px;height:11px;border:1px solid #9aa2ac;background:linear-gradient(135deg,#d8dce2 0,#eef0f3 55%,#fbfbfc 100%)"></div>
<svg class="a" style="left:1053px;top:367px;" width="8" height="9" viewBox="0 0 8 9"><path d="M1 5 L3 8 L7 1" stroke="#2a3f8f" stroke-width="1.5" fill="none"/></svg>
<div class="t" style="left:1064.4px;top:366.7px;font-size:10px;color:#111;font-weight:bold;-webkit-text-stroke:0.05px currentColor;">Data Venda.Ano</div>
<svg class="a" style="left:1188px;top:366px;" width="12" height="11" viewBox="0 0 12 11"><path d="M0.5 0.5H11.5L7 5.5V10.5L5 9V5.5Z" fill="#fff" stroke="#222" stroke-width="1.1"/></svg>
<div class="a" style="left:1051px;top:384px;width:11px;height:11px;border:1px solid #9aa2ac;background:linear-gradient(135deg,#d8dce2 0,#eef0f3 55%,#fbfbfc 100%)"></div>
<div class="t" style="left:1063.5px;top:385.2px;font-size:9.1px;color:#1e1e1e;">Data Venda.Dia</div>
<div class="a" style="left:1051px;top:402px;width:11px;height:11px;border:1px solid #9aa2ac;background:linear-gradient(135deg,#d8dce2 0,#eef0f3 55%,#fbfbfc 100%)"></div>
<div class="t" style="left:1063.5px;top:403.1px;font-size:9.1px;color:#1e1e1e;">Data Venda.Nome Feriado</div>
<div class="a" style="left:1051px;top:420px;width:11px;height:11px;border:1px solid #9aa2ac;background:linear-gradient(135deg,#d8dce2 0,#eef0f3 55%,#fbfbfc 100%)"></div>
<div class="t" style="left:1063.5px;top:420.6px;font-size:9.1px;color:#1e1e1e;">Data Venda.Nome Hora</div>
<div class="a" style="left:1051px;top:437px;width:11px;height:11px;border:1px solid #9aa2ac;background:linear-gradient(135deg,#d8dce2 0,#eef0f3 55%,#fbfbfc 100%)"></div>
<div class="t" style="left:1063.5px;top:438.1px;font-size:9.1px;color:#1e1e1e;">Data Venda.Nome Mes</div>
<div class="a" style="left:1021px;top:439px;width:182px;height:12px;background:#d6e4f5"></div>
<div class="a" style="left:1020px;top:439px;width:197px;height:1px;background:#8ea4c2"></div>
<div class="a" style="left:1015px;top:446px;width:207px;height:5px;background:linear-gradient(180deg,#c6d8ef,#e8f0fa 50%,#c6d8ef)"></div>
<div class="t" style="left:1020.0px;top:458.6px;font-size:9.2px;color:#1e1e1e;">Drag fields between areas below:</div>
<svg class="a" style="left:1021px;top:472px;" width="13" height="11" viewBox="0 0 13 11"><path d="M0.5 0.5H12.5L7.5 5.5V10.5L5.5 9.5V5.5Z" fill="#fff" stroke="#333" stroke-width="1.1"/></svg>
<div class="t" style="left:1041.4px;top:473.3px;font-size:9.2px;color:#1e1e1e;">Report Filter</div>
<svg class="a" style="left:1123px;top:471px;" width="13" height="12" viewBox="0 0 13 12"><rect x="0.5" y="0.5" width="12" height="11" fill="#fff4d8" stroke="#9a8a6a"/><path d="M0 3.5H13M0 6.5H13M0 9.5H13M3.5 0V12M6.5 0V12M9.5 0V12" stroke="#b0a080" stroke-width="0.7"/></svg>
<div class="t" style="left:1143.9px;top:473.3px;font-size:9.25px;color:#1e1e1e;">Legend Fields (...</div>
<div class="a" style="left:1020px;top:487px;width:95px;height:89px;background:#fff;border:1px solid #8ea4c2"></div>
<div class="a" style="left:1123px;top:487px;width:95px;height:89px;background:#fff;border:1px solid #8ea4c2"></div>
<div class="a" style="left:1022px;top:489px;width:91px;height:14px;border:1px solid #e9c27a;border-radius:1px;background:linear-gradient(180deg,#fff6dc 0,#ffe9b0 100%)"></div>
<div class="t" style="left:1027.0px;top:491.8px;font-size:9.2px;color:#1e1e1e;">Data Venda.Ano</div>
<svg class="a" style="left:1101px;top:494px;" width="7" height="4" viewBox="0 0 7 4"><path d="M0 0H7L3.5 4Z" fill="#111"/></svg>
<svg class="a" style="left:1021px;top:578px;" width="13" height="12" viewBox="0 0 13 12"><rect x="0.5" y="0.5" width="12" height="11" fill="#fff4d8" stroke="#9a8a6a"/><path d="M0 3.5H13M0 6.5H13M0 9.5H13M3.5 0V12M6.5 0V12M9.5 0V12" stroke="#b0a080" stroke-width="0.7"/></svg>
<div class="t" style="left:1041.8px;top:580.0px;font-size:9.1px;color:#1e1e1e;">Axis Fields (Ca...</div>
<div class="t" style="left:1124.0px;top:578.8px;font-size:12px;color:#111;font-weight:bold;-webkit-text-stroke:0.05px currentColor;">Σ</div>
<div class="t" style="left:1144.5px;top:580.1px;font-size:9px;color:#1e1e1e;">Values</div>
<div class="a" style="left:1020px;top:594px;width:95px;height:89px;background:#fff;border:1px solid #8ea4c2"></div>
<div class="a" style="left:1123px;top:594px;width:95px;height:89px;background:#fff;border:1px solid #8ea4c2"></div>
<div class="a" style="left:1022px;top:596px;width:91px;height:14px;border:1px solid #e9c27a;border-radius:1px;background:linear-gradient(180deg,#fff6dc 0,#ffe9b0 100%)"></div>
<div class="t" style="left:1027.0px;top:598.8px;font-size:9.2px;color:#1e1e1e;">Nome Dia Sem...</div>
<svg class="a" style="left:1101px;top:601px;" width="7" height="4" viewBox="0 0 7 4"><path d="M0 0H7L3.5 4Z" fill="#111"/></svg>
<div class="a" style="left:1125px;top:596px;width:91px;height:14px;border:1px solid #e9c27a;border-radius:1px;background:linear-gradient(180deg,#fff6dc 0,#ffe9b0 100%)"></div>
<div class="t" style="left:1130.0px;top:598.8px;font-size:9.2px;color:#1e1e1e;">Quantidade E...</div>
<svg class="a" style="left:1204px;top:601px;" width="7" height="4" viewBox="0 0 7 4"><path d="M0 0H7L3.5 4Z" fill="#111"/></svg>
<div class="a" style="left:1020px;top:690px;width:11px;height:11px;border:1px solid #9aa2ac;background:linear-gradient(135deg,#d8dce2 0,#eef0f3 55%,#fbfbfc 100%)"></div>
<div class="t" style="left:1036.3px;top:690.5px;font-size:9.3px;color:#1e1e1e;">Defer Layout Update</div>
<div class="a" style="left:1155px;top:687px;width:62px;height:17px;border:1px solid #c2c8d0;border-radius:2px;background:linear-gradient(180deg,#f6f7f9,#e9ecf0)"></div>
<div class="t" style="left:1170.6px;top:690.9px;font-size:9.1px;color:#a8adb5;">Update</div>
<svg class="a" style="left:1202px;top:648px;" width="22" height="46" viewBox="0 0 22 46"><path d="M1.5 3.5 L4 0.5 H22 V45 L1.5 31.5Z" fill="#f6f6f6" stroke="#a9afb6" stroke-width="1"/></svg>
<div class="a" style="left:1207px;top:654px;width:16px;height:18px;border-radius:2px;background:linear-gradient(180deg,#3a9cf4,#0a64d8)"></div>
<svg class="a" style="left:1208px;top:656px;" width="14" height="14" viewBox="0 0 14 14"><circle cx="7" cy="7" r="5.6" fill="#fff"/><path d="M2.5 7 H11.5 M4.5 5 L2.3 7 L4.5 9 M9.5 5 L11.7 7 L9.5 9" stroke="#0a64d8" stroke-width="1.5" fill="none"/></svg>
<div class="a" style="left:0px;top:698px;width:600px;height:14px;background:linear-gradient(180deg,#b1c8e8 0,#9cb8e0 100%)"></div>
<div class="a" style="left:0px;top:698px;width:54px;height:14px;background:linear-gradient(180deg,#dfe9f5,#c9d9ee);border-right:1px solid #9db5d8"></div>
<svg class="a" style="left:4px;top:702px;" width="46" height="7" viewBox="0 0 46 7"><path d="M1.5 0.5V6.5" stroke="#1f4290" stroke-width="1.3"/><path d="M6.5 0L2.8 3.5L6.5 7Z" fill="#1f4290"/><path d="M18.5 0L15 3.5L18.5 7Z" fill="#1f4290"/><path d="M27 0L30.5 3.5L27 7Z" fill="#1f4290"/><path d="M38 0L41.5 3.5L38 7Z" fill="#1f4290"/><path d="M42.5 0.5V6.5" stroke="#1f4290" stroke-width="1.3"/></svg>
<svg class="a" style="left:54px;top:698px;" width="90" height="14" viewBox="0 0 90 14"><path d="M0 0.5 H58.5 L49.5 13.5 H0Z" fill="#fdfdfe"/><path d="M58.5 0.5 L49.5 13.5" stroke="#9eb0c8" fill="none"/><path d="M49.5 13.5 L58.5 0.5 H86 L76 13.5Z" fill="#c9dbf1" stroke="#a3badb" stroke-width="0.8"/></svg>
<div class="t" style="left:61.4px;top:700.1px;font-size:11px;color:#1b3f8b;font-weight:bold;-webkit-text-stroke:0.05px currentColor;letter-spacing:-0.35px">Vendas</div>
<svg class="a" style="left:118px;top:700px;" width="12" height="10" viewBox="0 0 12 10"><circle cx="3" cy="3" r="2.3" fill="#f0a830" stroke="#c07010" stroke-width="0.6"/><rect x="4" y="3" width="7" height="6" fill="#eef2f8" stroke="#7a8aa0" stroke-width="0.8"/></svg>
<div class="a" style="left:0px;top:711px;width:1012px;height:1px;background:#7893c0"></div>
<div class="a" style="left:600px;top:698px;width:399px;height:14px;background:#7f9dc9"></div>
<div class="a" style="left:599px;top:700px;width:5px;height:11px;border:1px solid #6f87ad;background:#f4f7fb"></div>
<svg class="a" style="left:610px;top:702px;" width="5" height="8" viewBox="0 0 5 8"><path d="M5 0L0 4L5 8Z" fill="#3b5584"/></svg>
<div class="a" style="left:691px;top:700px;width:107px;height:11px;border:1px solid #6f87ad;border-radius:2px;background:linear-gradient(180deg,#f4f6fb 0,#e6ebf5 50%,#cfd9ea 100%)"></div>
<svg class="a" style="left:740px;top:702px;" width="8" height="7" viewBox="0 0 8 7"><path d="M0.5 0V7M2.5 0V7M4.5 0V7M6.5 0V7" stroke="#8a9ab4" stroke-width="0.8"/></svg>
<svg class="a" style="left:982px;top:702px;" width="5" height="8" viewBox="0 0 5 8"><path d="M0 0L5 4L0 8Z" fill="#3b5584"/></svg>
<div class="a" style="left:992px;top:700px;width:6px;height:11px;border:1px solid #6f87ad;background:#f4f7fb"></div>
<div class="a" style="left:999px;top:698px;width:14px;height:14px;background:#7f9dc9"></div>
<div class="a" style="left:0px;top:712px;width:1224px;height:19px;background:linear-gradient(180deg,#e4edf8 0,#d8e5f5 35%,#c3d6ef 55%,#c8d9f0 100%);border-top:1px solid #f0f5fb"></div>
<div class="t" style="left:6.5px;top:716.8px;font-size:9.4px;color:#2c4470;">Ready</div>
<div class="a" style="left:40px;top:713px;width:1px;height:17px;background:#a9bfdc"></div>
<div class="a" style="left:41px;top:713px;width:1px;height:17px;background:#f2f7fc"></div>
<svg class="a" style="left:48px;top:714px;" width="13" height="12" viewBox="0 0 13 12"><rect x="0.5" y="2.5" width="12" height="9" fill="#f4f7fc" stroke="#5a7ab0"/><rect x="0.5" y="2.5" width="12" height="2.5" fill="#5a84d0"/><circle cx="2.5" cy="2.5" r="2.2" fill="#e04a1a"/><path d="M3 9V7M6 9V6M9 9V8" stroke="#6a8ac0"/></svg>
<div class="a" style="left:68px;top:713px;width:1px;height:17px;background:#a9bfdc"></div>
<div class="a" style="left:1019px;top:713px;width:50px;height:17px;background:linear-gradient(180deg,#d0dff2,#b9cfeb);border-left:1px solid #a9bfdc"></div>
<div class="a" style="left:1021px;top:714px;width:15px;height:15px;border:1px solid #c2a050;border-radius:2px;background:linear-gradient(180deg,#fde9b6,#fbd07a)"></div>
<svg class="a" style="left:1023px;top:716px;" width="11" height="11" viewBox="0 0 11 11"><rect x="0.5" y="0.5" width="10" height="10" fill="#fff" stroke="#556"/><path d="M0 3.5H11M0 6.5H11M3.5 0V11M6.5 0V11" stroke="#556" stroke-width="0.8"/></svg>
<svg class="a" style="left:1037px;top:715px;" width="13" height="13" viewBox="0 0 13 13"><rect x="1.5" y="1.5" width="10" height="10" fill="#e8ecf2" stroke="#556"/><rect x="4" y="3.5" width="5" height="6" fill="#fff" stroke="#667"/></svg>
<svg class="a" style="left:1052px;top:715px;" width="14" height="13" viewBox="0 0 14 13"><rect x="1.5" y="1.5" width="11" height="10" fill="#e8ecf2" stroke="#556"/><rect x="3.5" y="1.5" width="3" height="6" fill="#fff" stroke="#667"/><rect x="7.5" y="1.5" width="3" height="6" fill="#fff" stroke="#667"/></svg>
<div class="t" style="left:1074.5px;top:716.3px;font-size:10.5px;color:#253f73;">70%</div>
<div class="a" style="left:1106px;top:714px;width:15px;height:15px;border-radius:50%;border:1px solid #7890b8;background:radial-gradient(circle at 50% 35%,#fff,#cfdcee)"></div>
<div class="a" style="left:1110px;top:721px;width:7px;height:2px;background:#333"></div>
<div class="a" style="left:1124px;top:721px;width:79px;height:1px;background:#8aa0c0"></div>
<div class="a" style="left:1124px;top:722px;width:79px;height:1px;background:#fff"></div>
<div class="a" style="left:1163px;top:719px;width:1px;height:5px;background:#8aa0c0"></div>
<svg class="a" style="left:1145px;top:714px;" width="9" height="14" viewBox="0 0 9 14"><path d="M0.5 0.5H8.5V9L4.5 13L0.5 9Z" fill="#f4f7fb" stroke="#6a7a90"/><path d="M4.5 3V8" stroke="#6a7a90"/></svg>
<div class="a" style="left:1205px;top:714px;width:15px;height:15px;border-radius:50%;border:1px solid #7890b8;background:radial-gradient(circle at 50% 35%,#fff,#cfdcee)"></div>
<div class="a" style="left:1209px;top:721px;width:7px;height:2px;background:#333"></div>
<div class="a" style="left:1211.5px;top:718.5px;width:2px;height:7px;background:#333"></div>
<div class="a" style="left:0px;top:731px;width:1224px;height:34px;background:linear-gradient(180deg,#2e343b 0,#161a1f 8%,#0f1317 50%,#0b0e12 100%)"></div>
<div class="a" style="left:0px;top:731px;width:1224px;height:1px;background:#3a4048"></div>
<svg class="a" style="left:7px;top:733px;" width="32" height="32" viewBox="0 0 32 32"><defs><radialGradient id="orb" cx="0.5" cy="0.55" r="0.55"><stop offset="0" stop-color="#3a8fd6"/><stop offset="0.65" stop-color="#1b5fa6"/><stop offset="1" stop-color="#0a2c55"/></radialGradient><radialGradient id="orbg" cx="0.5" cy="1" r="0.5"><stop offset="0" stop-color="#3ad8ff" stop-opacity="0.95"/><stop offset="1" stop-color="#3ad8ff" stop-opacity="0"/></radialGradient></defs><circle cx="16" cy="16" r="15.5" fill="url(#orb)" stroke="#0a1a2c" stroke-width="0.8"/><clipPath id="orbc"><circle cx="16" cy="16" r="15"/></clipPath><ellipse cx="16" cy="28" rx="12" ry="7" fill="url(#orbg)" clip-path="url(#orbc)"/><path d="M8.5 8.5 Q11 6.8 15 7.8 L14 14.2 Q10.5 13 7.5 14.5Z" fill="#f05a28"/><path d="M16.2 8.2 Q19.5 9.5 23.5 8 L22.4 14.6 Q19 16 15.2 14.6Z" fill="#8dc63f"/><path d="M7.3 15.7 Q10.5 14.2 13.9 15.4 L12.9 21.8 Q9.5 20.5 6.3 22Z" fill="#29a8e0"/><path d="M15 15.8 Q18.6 17.2 22.2 15.8 L21.2 22.4 Q17.5 23.8 14 22.4Z" fill="#fbb034"/><ellipse cx="16" cy="9.5" rx="11.5" ry="7.5" fill="#fff" fill-opacity="0.18"/></svg>
<div class="a" style="left:51px;top:731px;width:43px;height:34px;border:1px solid #62676e;border-radius:3px;background:linear-gradient(180deg,#52575e 0,#3a3e44 45%,#272a2f 55%,#1e2125 100%);box-shadow:inset 0 0 0 1px rgba(0,0,0,.5),inset 0 2px 0 rgba(255,255,255,.12)"></div>
<div class="a" style="left:156px;top:731px;width:43px;height:34px;border:1px solid #62676e;border-radius:3px;background:linear-gradient(180deg,#52575e 0,#3a3e44 45%,#272a2f 55%,#1e2125 100%);box-shadow:inset 0 0 0 1px rgba(0,0,0,.5),inset 0 2px 0 rgba(255,255,255,.12)"></div>
<div class="a" style="left:314px;top:731px;width:50px;height:34px;border:1px solid #62676e;border-radius:3px;background:linear-gradient(180deg,#52575e 0,#3a3e44 45%,#272a2f 55%,#1e2125 100%);box-shadow:inset 0 0 0 1px rgba(0,0,0,.5),inset 0 2px 0 rgba(255,255,255,.12)"></div>
<div class="a" style="left:367px;top:731px;width:50px;height:34px;border:1px solid #62676e;border-radius:3px;background:linear-gradient(180deg,#52575e 0,#3a3e44 45%,#272a2f 55%,#1e2125 100%);box-shadow:inset 0 0 0 1px rgba(0,0,0,.5),inset 0 2px 0 rgba(255,255,255,.12)"></div>
<div class="a" style="left:472px;top:731px;width:47px;height:34px;border:1px solid #62676e;border-radius:3px;background:linear-gradient(180deg,#52575e 0,#3a3e44 45%,#272a2f 55%,#1e2125 100%);box-shadow:inset 0 0 0 1px rgba(0,0,0,.5),inset 0 2px 0 rgba(255,255,255,.12)"></div>
<div class="a" style="left:523px;top:731px;width:49px;height:34px;border:1px solid #62676e;border-radius:3px;background:linear-gradient(180deg,#52575e 0,#3a3e44 45%,#272a2f 55%,#1e2125 100%);box-shadow:inset 0 0 0 1px rgba(0,0,0,.5),inset 0 2px 0 rgba(255,255,255,.12)"></div>
<div class="a" style="left:628px;top:731px;width:48px;height:34px;border:1px solid #62676e;border-radius:3px;background:linear-gradient(180deg,#52575e 0,#3a3e44 45%,#272a2f 55%,#1e2125 100%);box-shadow:inset 0 0 0 1px rgba(0,0,0,.5),inset 0 2px 0 rgba(255,255,255,.12)"></div>
<div class="a" style="left:679px;top:731px;width:48px;height:34px;border:1px solid #62676e;border-radius:3px;background:linear-gradient(180deg,#52575e 0,#3a3e44 45%,#272a2f 55%,#1e2125 100%);box-shadow:inset 0 0 0 1px rgba(0,0,0,.5),inset 0 2px 0 rgba(255,255,255,.12)"></div>
<div class="a" style="left:783px;top:731px;width:48px;height:34px;border:1px solid #62676e;border-radius:3px;background:linear-gradient(180deg,#52575e 0,#3a3e44 45%,#272a2f 55%,#1e2125 100%);box-shadow:inset 0 0 0 1px rgba(0,0,0,.5),inset 0 2px 0 rgba(255,255,255,.12)"></div>
<div class="a" style="left:835px;top:731px;width:44px;height:34px;border:1px solid #62676e;border-radius:3px;background:linear-gradient(180deg,#7d828a 0,#5d6168 45%,#464a50 55%,#3a3e44 100%);box-shadow:inset 0 0 0 1px rgba(0,0,0,.5),inset 0 2px 0 rgba(255,255,255,.12)"></div>
<div class="a" style="left:886px;top:731px;width:48px;height:34px;border:1px solid #62676e;border-radius:3px;background:linear-gradient(180deg,#52575e 0,#3a3e44 45%,#272a2f 55%,#1e2125 100%);box-shadow:inset 0 0 0 1px rgba(0,0,0,.5),inset 0 2px 0 rgba(255,255,255,.12)"></div>
<div class="a" style="left:938px;top:731px;width:48px;height:34px;border:1px solid #62676e;border-radius:3px;background:linear-gradient(180deg,#52575e 0,#3a3e44 45%,#272a2f 55%,#1e2125 100%);box-shadow:inset 0 0 0 1px rgba(0,0,0,.5),inset 0 2px 0 rgba(255,255,255,.12)"></div>
<div class="a" style="left:95px;top:733px;width:2px;height:31px;background:#4a4f56;border-radius:0 2px 2px 0"></div>
<div class="a" style="left:200px;top:733px;width:2px;height:31px;background:#4a4f56;border-radius:0 2px 2px 0"></div>
<div class="a" style="left:519px;top:733px;width:2px;height:31px;background:#4a4f56"></div>
<div class="a" style="left:880px;top:733px;width:2px;height:31px;background:#4a4f56"></div>
<svg class="a" style="left:58px;top:737px;" width="29" height="24" viewBox="0 0 29 24"><path d="M1 3 H10 L12 5 H27 V20 H1Z" fill="#f2d57a" stroke="#c9a540" stroke-width="0.8"/><rect x="3" y="6" width="22" height="9" fill="#fff8d8"/><circle cx="5" cy="4" r="1.2" fill="#2aa02a"/><circle cx="11" cy="5" r="1.2" fill="#d03030"/><circle cx="20" cy="6" r="1.2" fill="#3080e0"/><path d="M5 22 V15 H23 V22 H19 V18 H9 V22Z" fill="#5ab0e8" stroke="#3a80c0" stroke-width="0.8"/></svg>
<svg class="a" style="left:116px;top:738px;" width="23" height="22" viewBox="0 0 23 22"><rect x="3" y="1" width="19" height="20" fill="#6ab0e0" stroke="#3a80b8" stroke-width="0.8"/><rect x="1" y="2" width="19" height="19" fill="#8ac8f0" stroke="#3a80b8" stroke-width="0.8"/><circle cx="10.5" cy="11.5" r="7" fill="#f36f1a"/><path d="M8 7.5 L15 11.5 L8 15.5Z" fill="#fff"/></svg>
<svg class="a" style="left:164px;top:738px;" width="28" height="24" viewBox="0 0 28 24"><rect x="2" y="1" width="22" height="18" fill="#f7c24a" stroke="#d99a20"/><path d="M4 9 L14 15 L24 9 V19 H4Z" fill="#fff3c8" stroke="#d9a030" stroke-width="0.8"/><circle cx="14" cy="16" r="7.5" fill="#f4c430" stroke="#c99a10"/><path d="M11 15 L14 17 L17 14" stroke="#8a6a10" fill="none" stroke-width="1.2"/></svg>
<svg class="a" style="left:218px;top:736px;" width="26" height="26" viewBox="0 0 26 26"><rect x="2" y="1" width="12" height="15" fill="#eef2f8" stroke="#8090a8" stroke-width="0.8"/><rect x="6" y="4" width="12" height="15" fill="#f8fafc" stroke="#8090a8" stroke-width="0.8"/><circle cx="6" cy="9" r="3.5" fill="#3aa040"/><circle cx="17" cy="18" r="7.5" fill="#2e6ad8" stroke="#fff" stroke-width="1.4"/><text x="17" y="22" font-size="11" font-weight="bold" fill="#fff" text-anchor="middle" font-family="Liberation Sans">?</text></svg>
<div class="a" style="left:275px;top:736px;width:26px;height:25px;border-radius:3px;background:linear-gradient(180deg,#56d050,#1e9a1e);border:1px solid #127012"></div>
<svg class="a" style="left:277px;top:742px;" width="22" height="13" viewBox="0 0 22 13"><ellipse cx="11" cy="6.5" rx="10" ry="5.5" fill="#fff" stroke="#111" stroke-width="1.2"/><circle cx="11" cy="6.5" r="3.5" fill="#222"/><circle cx="11" cy="6.5" r="1.4" fill="#888"/></svg>
<svg class="a" style="left:326px;top:736px;" width="26" height="26" viewBox="0 0 26 26"><circle cx="13" cy="13" r="12" fill="#db4437"/><path d="M13 13 L2.6 19 A12 12 0 0 1 3.1 6.2Z" fill="#0f9d58"/><path d="M13 13 L24.4 9.3 A12 12 0 0 1 13 25Z" fill="#f4c20d"/><path d="M13 13 L13 25 A12 12 0 0 1 2.6 19Z" fill="#0f9d58"/><circle cx="13" cy="13" r="5.5" fill="#fff"/><circle cx="13" cy="13" r="4.2" fill="#4285f4"/></svg>
<svg class="a" style="left:377px;top:735px;" width="30" height="28" viewBox="0 0 30 28"><path d="M15 4 C8 4 4 9 4 15 C4 21 8.5 25 15 25 C19.5 25 23 23 25 19 H19 C18 20.5 16.8 21 15 21 C12 21 10 19 9.7 16.5 H25.5 C25.6 15.8 25.6 15.4 25.6 15 C25.6 8.5 21.5 4 15 4Z M9.9 12.5 C10.4 10 12.4 8.2 15 8.2 C17.6 8.2 19.4 10 19.8 12.5Z" fill="#1b9de2" stroke="#0e6fb0" stroke-width="0.6"/><path d="M3 24 C1 20 6 11 15 6 C22 2 28 1 28.5 4 C29 6 27 9 25 11 C26.5 8 27 5.5 25.5 4.8 C23 3.8 17 6.5 12 11 C7 15.5 4 21 5.5 24 C4.7 24.6 3.6 24.7 3 24Z" fill="#f7c325" stroke="#d09a10" stroke-width="0.5"/></svg>
<svg class="a" style="left:430px;top:736px;" width="30" height="26" viewBox="0 0 30 26"><rect x="3" y="2" width="20" height="15" fill="#1a4ab0" stroke="#c0c8d0" stroke-width="1.5"/><rect x="5" y="4" width="16" height="11" fill="#3a7ae0"/><path d="M9 17 V20 H17 V17" fill="#c0c8d0"/><ellipse cx="13" cy="21" rx="8" ry="2" fill="#b0b8c0"/><circle cx="22" cy="19" r="6" fill="#e0e4e8" stroke="#888" stroke-width="0.6"/><path d="M19 19H25M20.5 17.5L19 19L20.5 20.5M23.5 17.5L25 19L23.5 20.5" stroke="#2a9a2a" stroke-width="1" fill="none"/></svg>
<div class="a" style="left:480px;top:737px;width:29px;height:24px;background:#68217a"></div>
<svg class="a" style="left:483px;top:739px;" width="24" height="20" viewBox="0 0 24 20"><path d="M2 7 L5 5 L11 10 L18 2 L22 4 V16 L18 18 L11 10 L5 15 L2 13 L6 10Z" fill="#fff"/><path d="M18 6 V14 L14 10Z" fill="#68217a"/></svg>
<div class="a" style="left:534px;top:737px;width:26px;height:24px;border-radius:4px;background:linear-gradient(180deg,#4fb4f8,#0a6ad0);border:1px solid #0a4a90"></div>
<svg class="a" style="left:537px;top:739px;" width="20" height="20" viewBox="0 0 20 20"><circle cx="10" cy="10" r="8.5" fill="#fff"/><circle cx="10" cy="10" r="7" fill="#1a80e0"/><path d="M3 10H17M6 7L3 10L6 13M14 7L17 10L14 13" stroke="#fff" stroke-width="1.6" fill="none"/></svg>
<div class="a" style="left:586px;top:736px;width:27px;height:26px;background:#c00000;border:2px dotted #8a0000;border-radius:1px"></div>
<div class="t" style="left:599.5px;transform:translateX(-50%);top:741.8px;font-size:16px;color:#fff;font-weight:bold;-webkit-text-stroke:0.05px currentColor;font-style:italic">Fz</div>
<svg class="a" style="left:636px;top:736px;" width="32" height="26" viewBox="0 0 32 26"><path d="M3 14 L12 5 L20 13 L11 22Z" fill="#e85a20"/><path d="M11 6 L20 14" stroke="#f0c020" stroke-width="4"/><path d="M16 12 L25 5 L29 10 L20 17Z" fill="#3aa0e0"/><path d="M4 14 L10 20" stroke="#5ab030" stroke-width="4"/><rect x="20" y="17" width="9" height="9" fill="#fff" stroke="#333" stroke-width="0.8"/><text x="24.5" y="25" font-size="8" text-anchor="middle" fill="#111" font-family="Liberation Sans">9</text></svg>
<svg class="a" style="left:688px;top:736px;" width="32" height="27" viewBox="0 0 32 27"><rect x="2" y="2" width="10" height="12" rx="5" fill="#f0c020" stroke="#a08010" stroke-width="0.8"/><path d="M4 16 V24 H14 M14 6 H26 V14" stroke="#3aa03a" stroke-width="1.5" stroke-dasharray="2 1.5" fill="none"/><path d="M12 24 L24 12 M16 12 L26 22" stroke="#c0c4c8" stroke-width="3"/><path d="M22 10 L26 14" stroke="#333" stroke-width="3"/></svg>
<div class="a" style="left:741px;top:737px;width:25px;height:24px;background:#fff;border:1px solid #999"></div>
<svg class="a" style="left:743px;top:740px;" width="21" height="18" viewBox="0 0 21 18"><path d="M1 1H20M1 5H8M12 5H20M1 9H20M1 13H8M12 13H20M1 17H20" stroke="#222" stroke-width="2"/><rect x="8" y="3" width="4" height="12" fill="#222"/></svg>
<svg class="a" style="left:793px;top:736px;" width="28" height="27" viewBox="0 0 28 27"><circle cx="14" cy="13.5" r="12" fill="#00aff0"/><circle cx="7" cy="7" r="5" fill="#00aff0"/><circle cx="21" cy="20" r="5" fill="#00aff0"/><text x="14" y="20" font-size="18" font-weight="bold" fill="#fff" text-anchor="middle" font-family="Liberation Sans">S</text></svg>
<svg class="a" style="left:843px;top:736px;" width="28" height="26" viewBox="0 0 28 26"><rect x="2" y="3" width="20" height="22" fill="#fff" stroke="#4a9a4a"/><rect x="8" y="1" width="18" height="22" fill="#eaf6ea" stroke="#3a8a3a"/><path d="M10 7H24M10 11H24M10 15H24M10 19H24M15 3V23M20 3V23" stroke="#6ab06a" stroke-width="0.8"/><text x="8" y="18" font-size="14" font-weight="bold" fill="#2a7a2a" text-anchor="middle" font-family="Liberation Sans">X</text></svg>
<svg class="a" style="left:894px;top:736px;" width="30" height="26" viewBox="0 0 30 26"><rect x="9" y="2" width="18" height="22" fill="#fff" stroke="#5a7ac0"/><path d="M12 8H25M12 12H25M12 16H25M12 20H25" stroke="#7a9ae0" stroke-width="1"/><path d="M2 5 L15 3 V23 L2 21Z" fill="#3a6ad0"/><text x="8.5" y="16" font-size="10" font-weight="bold" fill="#fff" text-anchor="middle" font-family="Liberation Sans">W</text></svg>
<svg class="a" style="left:946px;top:736px;" width="30" height="27" viewBox="0 0 30 27"><circle cx="15" cy="13.5" r="12.5" fill="#d41c2c"/><circle cx="15" cy="13.5" r="10" fill="#e8283a" stroke="#fff" stroke-width="1"/><path d="M9 7.5 L21 19.5 M21 7.5 L9 19.5" stroke="#fff" stroke-width="4"/></svg>
<div class="t" style="left:999.0px;top:741.2px;font-size:10px;color:#fff;">PT</div>
<svg class="a" style="left:1023px;top:743px;" width="9" height="5" viewBox="0 0 9 5"><path d="M0 5L4.5 0L9 5Z" fill="#fff"/></svg>
<svg class="a" style="left:1042px;top:740px;" width="15" height="15" viewBox="0 0 15 15"><path d="M2 1V14" stroke="#ddd" stroke-width="1.2"/><path d="M3 1 H10 L9 5 H3Z" fill="#eee"/><circle cx="10" cy="10" r="4" fill="#e02020" stroke="#fff" stroke-width="0.8"/><path d="M8.2 8.2L11.8 11.8M11.8 8.2L8.2 11.8" stroke="#fff" stroke-width="1.2"/></svg>
<svg class="a" style="left:1062px;top:740px;" width="14" height="15" viewBox="0 0 14 15"><rect x="1" y="3" width="9" height="11" fill="none" stroke="#ddd" stroke-width="1.5"/><rect x="6" y="1" width="7" height="9" fill="#bbb" stroke="#ddd"/></svg>
<svg class="a" style="left:1082px;top:740px;" width="14" height="15" viewBox="0 0 14 15"><path d="M1 5H4L8 1V14L4 10H1Z" fill="#ccc" stroke="#eee" stroke-width="0.6"/><path d="M10 4Q12 7.5 10 11M12 2Q15 7.5 12 13" stroke="#ddd" stroke-width="1.2" fill="none"/></svg>
<svg class="a" style="left:1103px;top:740px;" width="15" height="16" viewBox="0 0 15 16"><path d="M1 4L4 2L7 4L4 6Z M7 4L10 2L13 4L10 6Z M1 8L4 6L7 8L4 10Z M7 8L10 6L13 8L10 10Z" fill="#3a8ae0"/><circle cx="11" cy="12" r="3.5" fill="#2aaa2a"/></svg>
<svg class="a" style="left:1123px;top:740px;" width="15" height="15" viewBox="0 0 15 15"><rect x="5" y="3" width="9" height="8" fill="none" stroke="#ddd" stroke-width="1.3"/><path d="M3 1V8M1 2H5M8 11V14M5 14H12" stroke="#ddd" stroke-width="1.2"/></svg>
<div class="t" style="left:1176.7px;transform:translateX(-50%);top:737.5px;font-size:10.5px;color:#fff;-webkit-text-stroke:0.1px currentColor">23:27</div>
<div class="t" style="left:1176.8px;transform:translateX(-50%);top:751.5px;font-size:10.5px;color:#fff;letter-spacing:-0.2px;-webkit-text-stroke:0.1px currentColor">16-05-2013</div>
<div class="a" style="left:1212px;top:731px;width:12px;height:34px;background:linear-gradient(90deg,#2a2f36,#3e444c);border-left:1px solid #60666e"></div>
</body></html>
